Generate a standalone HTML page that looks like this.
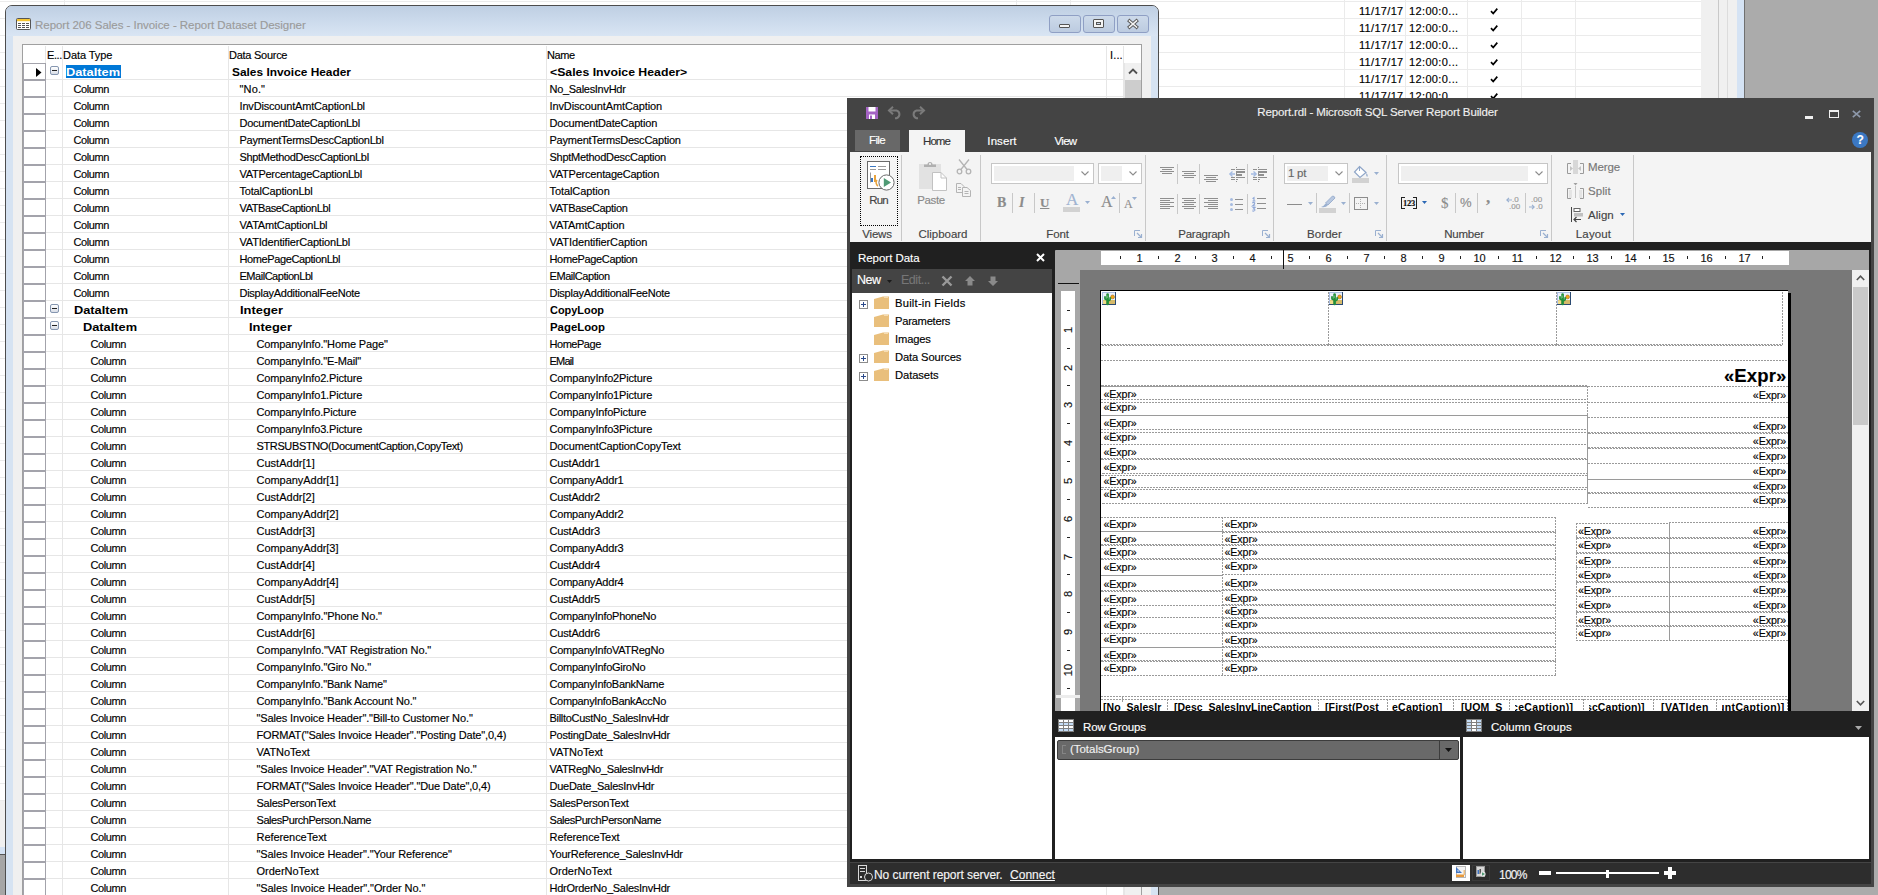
<!DOCTYPE html><html><head><meta charset="utf-8"><title>Report</title><style>
html,body{margin:0;padding:0;overflow:hidden;width:1878px;height:895px}
body{width:1878px;height:895px;overflow:hidden;position:relative;background:#ababab;font-family:"Liberation Sans",sans-serif;}
div{box-sizing:border-box}
.t{position:absolute;white-space:pre;line-height:17px;font-size:11px;color:#000;letter-spacing:-0.12px;-webkit-text-stroke:0.15px}
.b{font-weight:bold;font-size:11.5px;letter-spacing:0.3px;-webkit-text-stroke:0}
.s{font-size:11.5px;letter-spacing:-0.1px;color:#fff}
.e{font-size:10.7px;letter-spacing:-0.12px;line-height:12px}
.er{font-size:10.7px;letter-spacing:-0.12px;line-height:12px;text-align:right;width:60px}
.h{font-size:10.5px;font-weight:bold;letter-spacing:0;line-height:12px;-webkit-text-stroke:0}
.r{font-size:11.5px;letter-spacing:-0.15px;color:#444;line-height:14px}
.rg{font-size:11.5px;letter-spacing:-0.15px;color:#8a8a8a;line-height:14px}
.abs{position:absolute}
svg{position:absolute;overflow:visible}
</style></head><body><div class="abs" style="left:0;top:0;width:1878px;height:895px;overflow:hidden">
<div style="position:absolute;left:0px;top:0px;width:1701px;height:801px;background:#fff;"></div>
<div style="position:absolute;left:1159px;top:120px;width:600px;height:700px;background:#ababab;"></div>
<div style="position:absolute;left:0px;top:1px;width:1701px;height:1px;background:#ebebeb;"></div>
<div style="position:absolute;left:0px;top:18px;width:1701px;height:1px;background:#ebebeb;"></div>
<div style="position:absolute;left:0px;top:35px;width:1701px;height:1px;background:#ebebeb;"></div>
<div style="position:absolute;left:0px;top:52px;width:1701px;height:1px;background:#ebebeb;"></div>
<div style="position:absolute;left:0px;top:69px;width:1701px;height:1px;background:#ebebeb;"></div>
<div style="position:absolute;left:0px;top:86px;width:1701px;height:1px;background:#ebebeb;"></div>
<div style="position:absolute;left:0px;top:103px;width:1701px;height:1px;background:#ebebeb;"></div>
<div style="position:absolute;left:0px;top:120px;width:1701px;height:1px;background:#ebebeb;"></div>
<div style="position:absolute;left:0px;top:137px;width:1701px;height:1px;background:#ebebeb;"></div>
<div style="position:absolute;left:0px;top:154px;width:1701px;height:1px;background:#ebebeb;"></div>
<div style="position:absolute;left:0px;top:171px;width:1701px;height:1px;background:#ebebeb;"></div>
<div style="position:absolute;left:0px;top:188px;width:1701px;height:1px;background:#ebebeb;"></div>
<div style="position:absolute;left:0px;top:205px;width:1701px;height:1px;background:#ebebeb;"></div>
<div style="position:absolute;left:0px;top:222px;width:1701px;height:1px;background:#ebebeb;"></div>
<div style="position:absolute;left:0px;top:239px;width:1701px;height:1px;background:#ebebeb;"></div>
<div style="position:absolute;left:0px;top:256px;width:1701px;height:1px;background:#ebebeb;"></div>
<div style="position:absolute;left:0px;top:273px;width:1701px;height:1px;background:#ebebeb;"></div>
<div style="position:absolute;left:0px;top:290px;width:1701px;height:1px;background:#ebebeb;"></div>
<div style="position:absolute;left:0px;top:307px;width:1701px;height:1px;background:#ebebeb;"></div>
<div style="position:absolute;left:0px;top:324px;width:1701px;height:1px;background:#ebebeb;"></div>
<div style="position:absolute;left:0px;top:341px;width:1701px;height:1px;background:#ebebeb;"></div>
<div style="position:absolute;left:0px;top:358px;width:1701px;height:1px;background:#ebebeb;"></div>
<div style="position:absolute;left:0px;top:375px;width:1701px;height:1px;background:#ebebeb;"></div>
<div style="position:absolute;left:0px;top:392px;width:1701px;height:1px;background:#ebebeb;"></div>
<div style="position:absolute;left:0px;top:409px;width:1701px;height:1px;background:#ebebeb;"></div>
<div style="position:absolute;left:0px;top:426px;width:1701px;height:1px;background:#ebebeb;"></div>
<div style="position:absolute;left:0px;top:443px;width:1701px;height:1px;background:#ebebeb;"></div>
<div style="position:absolute;left:0px;top:460px;width:1701px;height:1px;background:#ebebeb;"></div>
<div style="position:absolute;left:0px;top:477px;width:1701px;height:1px;background:#ebebeb;"></div>
<div style="position:absolute;left:0px;top:494px;width:1701px;height:1px;background:#ebebeb;"></div>
<div style="position:absolute;left:0px;top:511px;width:1701px;height:1px;background:#ebebeb;"></div>
<div style="position:absolute;left:0px;top:528px;width:1701px;height:1px;background:#ebebeb;"></div>
<div style="position:absolute;left:0px;top:545px;width:1701px;height:1px;background:#ebebeb;"></div>
<div style="position:absolute;left:0px;top:562px;width:1701px;height:1px;background:#ebebeb;"></div>
<div style="position:absolute;left:0px;top:579px;width:1701px;height:1px;background:#ebebeb;"></div>
<div style="position:absolute;left:0px;top:596px;width:1701px;height:1px;background:#ebebeb;"></div>
<div style="position:absolute;left:0px;top:613px;width:1701px;height:1px;background:#ebebeb;"></div>
<div style="position:absolute;left:0px;top:630px;width:1701px;height:1px;background:#ebebeb;"></div>
<div style="position:absolute;left:0px;top:647px;width:1701px;height:1px;background:#ebebeb;"></div>
<div style="position:absolute;left:0px;top:664px;width:1701px;height:1px;background:#ebebeb;"></div>
<div style="position:absolute;left:0px;top:681px;width:1701px;height:1px;background:#ebebeb;"></div>
<div style="position:absolute;left:0px;top:698px;width:1701px;height:1px;background:#ebebeb;"></div>
<div style="position:absolute;left:0px;top:715px;width:1701px;height:1px;background:#ebebeb;"></div>
<div style="position:absolute;left:0px;top:732px;width:1701px;height:1px;background:#ebebeb;"></div>
<div style="position:absolute;left:0px;top:749px;width:1701px;height:1px;background:#ebebeb;"></div>
<div style="position:absolute;left:0px;top:766px;width:1701px;height:1px;background:#ebebeb;"></div>
<div style="position:absolute;left:0px;top:783px;width:1701px;height:1px;background:#ebebeb;"></div>
<div style="position:absolute;left:0px;top:800px;width:1701px;height:1px;background:#ebebeb;"></div>
<div style="position:absolute;left:64px;top:0px;width:1px;height:801px;background:#ebebeb;"></div>
<div style="position:absolute;left:1016px;top:0px;width:1px;height:801px;background:#ebebeb;"></div>
<div style="position:absolute;left:1070px;top:0px;width:1px;height:801px;background:#ebebeb;"></div>
<div style="position:absolute;left:1344px;top:0px;width:1px;height:801px;background:#ebebeb;"></div>
<div style="position:absolute;left:1405px;top:0px;width:1px;height:801px;background:#ebebeb;"></div>
<div style="position:absolute;left:1467px;top:0px;width:1px;height:801px;background:#ebebeb;"></div>
<div style="position:absolute;left:1521px;top:0px;width:1px;height:801px;background:#ebebeb;"></div>
<div style="position:absolute;left:1575px;top:0px;width:1px;height:801px;background:#ebebeb;"></div>
<div style="position:absolute;left:1701px;top:0px;width:36px;height:120px;background:#f0f0f0;"></div>
<div style="position:absolute;left:1718px;top:0px;width:1px;height:120px;background:#c9c9c9;"></div>
<div style="position:absolute;left:1727px;top:0px;width:1px;height:120px;background:#dcdcdc;"></div>
<div style="position:absolute;left:1737px;top:0px;width:7px;height:120px;background:#d5e3f4;"></div>
<div style="position:absolute;left:1744px;top:0px;width:1px;height:120px;background:#707070;"></div>
<div style="position:absolute;left:0px;top:801px;width:5px;height:46px;background:#f0f0f0;"></div>
<div style="position:absolute;left:0px;top:847px;width:5px;height:7px;background:#d5e3f4;"></div>
<div style="position:absolute;left:0px;top:854px;width:5px;height:1px;background:#555;"></div>
<div style="position:absolute;left:0px;top:855px;width:5px;height:40px;background:#a6a6a6;"></div>
<div class="t " style="left:1359px;top:3px;;letter-spacing:0.311px;">11/17/17</div>
<div class="t " style="left:1409px;top:3px;;letter-spacing:0.362px;">12:00:0...</div>
<svg style="left:1490px;top:7px" width="9" height="9" viewBox="0 0 9 9"><path d="M1 4.2 L3.2 6.5 L7.3 1.6" stroke="#000" stroke-width="1.7" fill="none"/></svg>
<div class="t " style="left:1359px;top:20px;;letter-spacing:0.311px;">11/17/17</div>
<div class="t " style="left:1409px;top:20px;;letter-spacing:0.362px;">12:00:0...</div>
<svg style="left:1490px;top:24px" width="9" height="9" viewBox="0 0 9 9"><path d="M1 4.2 L3.2 6.5 L7.3 1.6" stroke="#000" stroke-width="1.7" fill="none"/></svg>
<div class="t " style="left:1359px;top:37px;;letter-spacing:0.311px;">11/17/17</div>
<div class="t " style="left:1409px;top:37px;;letter-spacing:0.362px;">12:00:0...</div>
<svg style="left:1490px;top:41px" width="9" height="9" viewBox="0 0 9 9"><path d="M1 4.2 L3.2 6.5 L7.3 1.6" stroke="#000" stroke-width="1.7" fill="none"/></svg>
<div class="t " style="left:1359px;top:54px;;letter-spacing:0.311px;">11/17/17</div>
<div class="t " style="left:1409px;top:54px;;letter-spacing:0.362px;">12:00:0...</div>
<svg style="left:1490px;top:58px" width="9" height="9" viewBox="0 0 9 9"><path d="M1 4.2 L3.2 6.5 L7.3 1.6" stroke="#000" stroke-width="1.7" fill="none"/></svg>
<div class="t " style="left:1359px;top:71px;;letter-spacing:0.311px;">11/17/17</div>
<div class="t " style="left:1409px;top:71px;;letter-spacing:0.362px;">12:00:0...</div>
<svg style="left:1490px;top:75px" width="9" height="9" viewBox="0 0 9 9"><path d="M1 4.2 L3.2 6.5 L7.3 1.6" stroke="#000" stroke-width="1.7" fill="none"/></svg>
<div class="t " style="left:1359px;top:88px;;letter-spacing:0.311px;">11/17/17</div>
<div class="t " style="left:1409px;top:88px;;letter-spacing:0.362px;">12:00:0...</div>
<svg style="left:1490px;top:92px" width="9" height="9" viewBox="0 0 9 9"><path d="M1 4.2 L3.2 6.5 L7.3 1.6" stroke="#000" stroke-width="1.7" fill="none"/></svg>
<div class="abs" style="left:5px;top:5px;width:1154px;height:900px;border:1px solid #4d4d4d;border-radius:7px 7px 0 0;background:#d6e3f2;overflow:hidden">
<div class="abs" style="left:0;top:0;width:1152px;height:30px;background:linear-gradient(#bfcfe3,#c9d8ea 40%,#d9e5f3)"></div>
</div>
<div style="position:absolute;left:13px;top:36px;width:1138px;height:870px;background:#f0f0f0;"></div>
<svg style="left:16px;top:18px" width="16" height="13" viewBox="0 0 16 13"><rect x="0.5" y="0.5" width="14" height="11" rx="1" fill="#fff" stroke="#555"/><rect x="1" y="1" width="13" height="2.2" fill="#f4c430"/><g stroke="#555" stroke-width="1"><path d="M2 5.5h3M6 5.5h3M10 5.5h3M2 7.5h3M6 7.5h3M10 7.5h3M2 9.5h3M6 9.5h3M10 9.5h3"/></g></svg>
<div class="t s" style="left:35px;top:16px;color:#9b9b9b;line-height:18px;letter-spacing:-0.031px;">Report 206 Sales - Invoice - Report Dataset Designer</div>
<div class="abs" style="left:1049px;top:15px;width:32px;height:18px;border:1px solid #8f9fc4;border-radius:3px;background:linear-gradient(#cddaea,#bccbe0)"></div>
<div class="abs" style="left:1083px;top:15px;width:32px;height:18px;border:1px solid #8f9fc4;border-radius:3px;background:linear-gradient(#cddaea,#bccbe0)"></div>
<div class="abs" style="left:1117px;top:15px;width:32px;height:18px;border:1px solid #8f9fc4;border-radius:3px;background:linear-gradient(#cddaea,#bccbe0)"></div>
<div class="abs" style="left:1059px;top:24px;width:11px;height:4px;border:1px solid #555;border-radius:1px;background:#f4f4f4"></div>
<div class="abs" style="left:1093px;top:19px;width:11px;height:9px;border:1px solid #555;border-radius:1px;background:#f4f4f4"></div>
<div class="abs" style="left:1096px;top:22px;width:5px;height:3px;border:1px solid #555;background:#cddaea"></div>
<svg style="left:1128px;top:20px" width="10" height="8" viewBox="0 0 10 8"><path d="M1.5 1 L8.5 7 M8.5 1 L1.5 7" stroke="#555" stroke-width="3.4" stroke-linecap="square"/><path d="M1.5 1 L8.5 7 M8.5 1 L1.5 7" stroke="#f4f4f4" stroke-width="1.6" stroke-linecap="square"/></svg>
<div class="abs" style="left:22px;top:44px;width:1120px;height:870px;border:1px solid #a0a0a0;background:#fff"></div>
<div style="position:absolute;left:45px;top:46px;width:1px;height:860px;background:#e6e6e6;"></div>
<div style="position:absolute;left:62px;top:46px;width:1px;height:860px;background:#e6e6e6;"></div>
<div style="position:absolute;left:228px;top:46px;width:1px;height:860px;background:#e6e6e6;"></div>
<div style="position:absolute;left:546px;top:46px;width:1px;height:860px;background:#e6e6e6;"></div>
<div style="position:absolute;left:1106px;top:46px;width:1px;height:860px;background:#e6e6e6;"></div>
<div style="position:absolute;left:1123px;top:46px;width:1px;height:860px;background:#e6e6e6;"></div>
<div style="position:absolute;left:46px;top:79px;width:1078px;height:1px;background:#e6e6e6;"></div>
<div style="position:absolute;left:46px;top:96px;width:1078px;height:1px;background:#e6e6e6;"></div>
<div style="position:absolute;left:46px;top:113px;width:1078px;height:1px;background:#e6e6e6;"></div>
<div style="position:absolute;left:46px;top:130px;width:1078px;height:1px;background:#e6e6e6;"></div>
<div style="position:absolute;left:46px;top:147px;width:1078px;height:1px;background:#e6e6e6;"></div>
<div style="position:absolute;left:46px;top:164px;width:1078px;height:1px;background:#e6e6e6;"></div>
<div style="position:absolute;left:46px;top:181px;width:1078px;height:1px;background:#e6e6e6;"></div>
<div style="position:absolute;left:46px;top:198px;width:1078px;height:1px;background:#e6e6e6;"></div>
<div style="position:absolute;left:46px;top:215px;width:1078px;height:1px;background:#e6e6e6;"></div>
<div style="position:absolute;left:46px;top:232px;width:1078px;height:1px;background:#e6e6e6;"></div>
<div style="position:absolute;left:46px;top:249px;width:1078px;height:1px;background:#e6e6e6;"></div>
<div style="position:absolute;left:46px;top:266px;width:1078px;height:1px;background:#e6e6e6;"></div>
<div style="position:absolute;left:46px;top:283px;width:1078px;height:1px;background:#e6e6e6;"></div>
<div style="position:absolute;left:46px;top:300px;width:1078px;height:1px;background:#e6e6e6;"></div>
<div style="position:absolute;left:46px;top:317px;width:1078px;height:1px;background:#e6e6e6;"></div>
<div style="position:absolute;left:46px;top:334px;width:1078px;height:1px;background:#e6e6e6;"></div>
<div style="position:absolute;left:46px;top:351px;width:1078px;height:1px;background:#e6e6e6;"></div>
<div style="position:absolute;left:46px;top:368px;width:1078px;height:1px;background:#e6e6e6;"></div>
<div style="position:absolute;left:46px;top:385px;width:1078px;height:1px;background:#e6e6e6;"></div>
<div style="position:absolute;left:46px;top:402px;width:1078px;height:1px;background:#e6e6e6;"></div>
<div style="position:absolute;left:46px;top:419px;width:1078px;height:1px;background:#e6e6e6;"></div>
<div style="position:absolute;left:46px;top:436px;width:1078px;height:1px;background:#e6e6e6;"></div>
<div style="position:absolute;left:46px;top:453px;width:1078px;height:1px;background:#e6e6e6;"></div>
<div style="position:absolute;left:46px;top:470px;width:1078px;height:1px;background:#e6e6e6;"></div>
<div style="position:absolute;left:46px;top:487px;width:1078px;height:1px;background:#e6e6e6;"></div>
<div style="position:absolute;left:46px;top:504px;width:1078px;height:1px;background:#e6e6e6;"></div>
<div style="position:absolute;left:46px;top:521px;width:1078px;height:1px;background:#e6e6e6;"></div>
<div style="position:absolute;left:46px;top:538px;width:1078px;height:1px;background:#e6e6e6;"></div>
<div style="position:absolute;left:46px;top:555px;width:1078px;height:1px;background:#e6e6e6;"></div>
<div style="position:absolute;left:46px;top:572px;width:1078px;height:1px;background:#e6e6e6;"></div>
<div style="position:absolute;left:46px;top:589px;width:1078px;height:1px;background:#e6e6e6;"></div>
<div style="position:absolute;left:46px;top:606px;width:1078px;height:1px;background:#e6e6e6;"></div>
<div style="position:absolute;left:46px;top:623px;width:1078px;height:1px;background:#e6e6e6;"></div>
<div style="position:absolute;left:46px;top:640px;width:1078px;height:1px;background:#e6e6e6;"></div>
<div style="position:absolute;left:46px;top:657px;width:1078px;height:1px;background:#e6e6e6;"></div>
<div style="position:absolute;left:46px;top:674px;width:1078px;height:1px;background:#e6e6e6;"></div>
<div style="position:absolute;left:46px;top:691px;width:1078px;height:1px;background:#e6e6e6;"></div>
<div style="position:absolute;left:46px;top:708px;width:1078px;height:1px;background:#e6e6e6;"></div>
<div style="position:absolute;left:46px;top:725px;width:1078px;height:1px;background:#e6e6e6;"></div>
<div style="position:absolute;left:46px;top:742px;width:1078px;height:1px;background:#e6e6e6;"></div>
<div style="position:absolute;left:46px;top:759px;width:1078px;height:1px;background:#e6e6e6;"></div>
<div style="position:absolute;left:46px;top:776px;width:1078px;height:1px;background:#e6e6e6;"></div>
<div style="position:absolute;left:46px;top:793px;width:1078px;height:1px;background:#e6e6e6;"></div>
<div style="position:absolute;left:46px;top:810px;width:1078px;height:1px;background:#e6e6e6;"></div>
<div style="position:absolute;left:46px;top:827px;width:1078px;height:1px;background:#e6e6e6;"></div>
<div style="position:absolute;left:46px;top:844px;width:1078px;height:1px;background:#e6e6e6;"></div>
<div style="position:absolute;left:46px;top:861px;width:1078px;height:1px;background:#e6e6e6;"></div>
<div style="position:absolute;left:46px;top:878px;width:1078px;height:1px;background:#e6e6e6;"></div>
<div style="position:absolute;left:46px;top:895px;width:1078px;height:1px;background:#e6e6e6;"></div>
<div style="position:absolute;left:23px;top:63px;width:23px;height:1px;background:#a3a3ab;"></div>
<div style="position:absolute;left:23px;top:79px;width:23px;height:2px;background:#a3a3ab;"></div>
<div style="position:absolute;left:23px;top:96px;width:23px;height:2px;background:#a3a3ab;"></div>
<div style="position:absolute;left:23px;top:113px;width:23px;height:2px;background:#a3a3ab;"></div>
<div style="position:absolute;left:23px;top:130px;width:23px;height:2px;background:#a3a3ab;"></div>
<div style="position:absolute;left:23px;top:147px;width:23px;height:2px;background:#a3a3ab;"></div>
<div style="position:absolute;left:23px;top:164px;width:23px;height:2px;background:#a3a3ab;"></div>
<div style="position:absolute;left:23px;top:181px;width:23px;height:2px;background:#a3a3ab;"></div>
<div style="position:absolute;left:23px;top:198px;width:23px;height:2px;background:#a3a3ab;"></div>
<div style="position:absolute;left:23px;top:215px;width:23px;height:2px;background:#a3a3ab;"></div>
<div style="position:absolute;left:23px;top:232px;width:23px;height:2px;background:#a3a3ab;"></div>
<div style="position:absolute;left:23px;top:249px;width:23px;height:2px;background:#a3a3ab;"></div>
<div style="position:absolute;left:23px;top:266px;width:23px;height:2px;background:#a3a3ab;"></div>
<div style="position:absolute;left:23px;top:283px;width:23px;height:2px;background:#a3a3ab;"></div>
<div style="position:absolute;left:23px;top:300px;width:23px;height:2px;background:#a3a3ab;"></div>
<div style="position:absolute;left:23px;top:317px;width:23px;height:2px;background:#a3a3ab;"></div>
<div style="position:absolute;left:23px;top:334px;width:23px;height:2px;background:#a3a3ab;"></div>
<div style="position:absolute;left:23px;top:351px;width:23px;height:2px;background:#a3a3ab;"></div>
<div style="position:absolute;left:23px;top:368px;width:23px;height:2px;background:#a3a3ab;"></div>
<div style="position:absolute;left:23px;top:385px;width:23px;height:2px;background:#a3a3ab;"></div>
<div style="position:absolute;left:23px;top:402px;width:23px;height:2px;background:#a3a3ab;"></div>
<div style="position:absolute;left:23px;top:419px;width:23px;height:2px;background:#a3a3ab;"></div>
<div style="position:absolute;left:23px;top:436px;width:23px;height:2px;background:#a3a3ab;"></div>
<div style="position:absolute;left:23px;top:453px;width:23px;height:2px;background:#a3a3ab;"></div>
<div style="position:absolute;left:23px;top:470px;width:23px;height:2px;background:#a3a3ab;"></div>
<div style="position:absolute;left:23px;top:487px;width:23px;height:2px;background:#a3a3ab;"></div>
<div style="position:absolute;left:23px;top:504px;width:23px;height:2px;background:#a3a3ab;"></div>
<div style="position:absolute;left:23px;top:521px;width:23px;height:2px;background:#a3a3ab;"></div>
<div style="position:absolute;left:23px;top:538px;width:23px;height:2px;background:#a3a3ab;"></div>
<div style="position:absolute;left:23px;top:555px;width:23px;height:2px;background:#a3a3ab;"></div>
<div style="position:absolute;left:23px;top:572px;width:23px;height:2px;background:#a3a3ab;"></div>
<div style="position:absolute;left:23px;top:589px;width:23px;height:2px;background:#a3a3ab;"></div>
<div style="position:absolute;left:23px;top:606px;width:23px;height:2px;background:#a3a3ab;"></div>
<div style="position:absolute;left:23px;top:623px;width:23px;height:2px;background:#a3a3ab;"></div>
<div style="position:absolute;left:23px;top:640px;width:23px;height:2px;background:#a3a3ab;"></div>
<div style="position:absolute;left:23px;top:657px;width:23px;height:2px;background:#a3a3ab;"></div>
<div style="position:absolute;left:23px;top:674px;width:23px;height:2px;background:#a3a3ab;"></div>
<div style="position:absolute;left:23px;top:691px;width:23px;height:2px;background:#a3a3ab;"></div>
<div style="position:absolute;left:23px;top:708px;width:23px;height:2px;background:#a3a3ab;"></div>
<div style="position:absolute;left:23px;top:725px;width:23px;height:2px;background:#a3a3ab;"></div>
<div style="position:absolute;left:23px;top:742px;width:23px;height:2px;background:#a3a3ab;"></div>
<div style="position:absolute;left:23px;top:759px;width:23px;height:2px;background:#a3a3ab;"></div>
<div style="position:absolute;left:23px;top:776px;width:23px;height:2px;background:#a3a3ab;"></div>
<div style="position:absolute;left:23px;top:793px;width:23px;height:2px;background:#a3a3ab;"></div>
<div style="position:absolute;left:23px;top:810px;width:23px;height:2px;background:#a3a3ab;"></div>
<div style="position:absolute;left:23px;top:827px;width:23px;height:2px;background:#a3a3ab;"></div>
<div style="position:absolute;left:23px;top:844px;width:23px;height:2px;background:#a3a3ab;"></div>
<div style="position:absolute;left:23px;top:861px;width:23px;height:2px;background:#a3a3ab;"></div>
<div style="position:absolute;left:23px;top:878px;width:23px;height:2px;background:#a3a3ab;"></div>
<div style="position:absolute;left:23px;top:895px;width:23px;height:2px;background:#a3a3ab;"></div>
<div style="position:absolute;left:23px;top:63px;width:1px;height:840px;background:#a3a3ab;"></div>
<div style="position:absolute;left:45px;top:63px;width:1px;height:840px;background:#a3a3ab;"></div>
<div style="position:absolute;left:1125px;top:63px;width:16px;height:840px;background:#f0f0f0;"></div>
<div style="position:absolute;left:1124px;top:63px;width:1px;height:840px;background:#e6e6e6;"></div>
<div style="position:absolute;left:1125px;top:80px;width:16px;height:30px;background:#cdcdcd;"></div>
<svg style="left:1128px;top:68px" width="10" height="7" viewBox="0 0 10 7"><path d="M1 5.5 L5 1.5 L9 5.5" stroke="#505050" stroke-width="1.8" fill="none"/></svg>
<div class="t " style="left:47px;top:47px;;letter-spacing:-0.428px;">E...</div>
<div class="t " style="left:63px;top:47px;;letter-spacing:-0.067px;">Data Type</div>
<div class="t " style="left:229px;top:47px;;letter-spacing:-0.266px;">Data Source</div>
<div class="t " style="left:547px;top:47px;;letter-spacing:-0.427px;">Name</div>
<div class="t " style="left:1110px;top:47px;;letter-spacing:0.149px;">I...</div>
<svg style="left:36px;top:68px" width="6" height="9" viewBox="0 0 6 9"><path d="M0 0 L5.5 4.5 L0 9 Z" fill="#000"/></svg>
<div style="position:absolute;left:66px;top:65px;width:55px;height:13px;background:#0078d7;"></div>
<div class="t b" style="left:66px;top:64px;color:#fff;letter-spacing:0;transform:scaleX(1.1124);transform-origin:0 0;">DataItem</div>
<div class="t b" style="left:232px;top:64px;;letter-spacing:0;transform:scaleX(1.0342);transform-origin:0 0;">Sales Invoice Header</div>
<div class="t b" style="left:550px;top:64px;;letter-spacing:0;transform:scaleX(1.0674);transform-origin:0 0;">&lt;Sales Invoice Header&gt;</div>
<div class="abs" style="left:50px;top:66px;width:9px;height:9px;border:1px solid #8596b0;border-radius:2px;background:linear-gradient(#fff,#d8dde6)"></div>
<div style="position:absolute;left:52px;top:70px;width:5px;height:1px;background:#222;"></div>
<div class="t " style="left:73.5px;top:80.7px;;letter-spacing:-0.396px;">Column</div>
<div class="t " style="left:239.5px;top:80.7px;;letter-spacing:0.145px;">"No."</div>
<div class="t " style="left:549.5px;top:80.7px;;letter-spacing:-0.292px;">No_SalesInvHdr</div>
<div class="t " style="left:73.5px;top:97.7px;;letter-spacing:-0.396px;">Column</div>
<div class="t " style="left:239.5px;top:97.7px;;letter-spacing:-0.178px;">InvDiscountAmtCaptionLbl</div>
<div class="t " style="left:549.5px;top:97.7px;;letter-spacing:-0.116px;">InvDiscountAmtCaption</div>
<div class="t " style="left:73.5px;top:114.7px;;letter-spacing:-0.396px;">Column</div>
<div class="t " style="left:239.5px;top:114.7px;;letter-spacing:-0.252px;">DocumentDateCaptionLbl</div>
<div class="t " style="left:549.5px;top:114.7px;;letter-spacing:-0.195px;">DocumentDateCaption</div>
<div class="t " style="left:73.5px;top:131.7px;;letter-spacing:-0.396px;">Column</div>
<div class="t " style="left:239.5px;top:131.7px;;letter-spacing:-0.266px;">PaymentTermsDescCaptionLbl</div>
<div class="t " style="left:549.5px;top:131.7px;;letter-spacing:-0.221px;">PaymentTermsDescCaption</div>
<div class="t " style="left:73.5px;top:148.7px;;letter-spacing:-0.396px;">Column</div>
<div class="t " style="left:239.5px;top:148.7px;;letter-spacing:-0.32px;">ShptMethodDescCaptionLbl</div>
<div class="t " style="left:549.5px;top:148.7px;;letter-spacing:-0.278px;">ShptMethodDescCaption</div>
<div class="t " style="left:73.5px;top:165.7px;;letter-spacing:-0.396px;">Column</div>
<div class="t " style="left:239.5px;top:165.7px;;letter-spacing:-0.271px;">VATPercentageCaptionLbl</div>
<div class="t " style="left:549.5px;top:165.7px;;letter-spacing:-0.219px;">VATPercentageCaption</div>
<div class="t " style="left:73.5px;top:182.7px;;letter-spacing:-0.396px;">Column</div>
<div class="t " style="left:239.5px;top:182.7px;;letter-spacing:-0.187px;">TotalCaptionLbl</div>
<div class="t " style="left:549.5px;top:182.7px;;letter-spacing:-0.079px;">TotalCaption</div>
<div class="t " style="left:73.5px;top:199.7px;;letter-spacing:-0.396px;">Column</div>
<div class="t " style="left:239.5px;top:199.7px;;letter-spacing:-0.39px;">VATBaseCaptionLbl</div>
<div class="t " style="left:549.5px;top:199.7px;;letter-spacing:-0.341px;">VATBaseCaption</div>
<div class="t " style="left:73.5px;top:216.7px;;letter-spacing:-0.396px;">Column</div>
<div class="t " style="left:239.5px;top:216.7px;;letter-spacing:-0.203px;">VATAmtCaptionLbl</div>
<div class="t " style="left:549.5px;top:216.7px;;letter-spacing:-0.108px;">VATAmtCaption</div>
<div class="t " style="left:73.5px;top:233.7px;;letter-spacing:-0.396px;">Column</div>
<div class="t " style="left:239.5px;top:233.7px;;letter-spacing:-0.174px;">VATIdentifierCaptionLbl</div>
<div class="t " style="left:549.5px;top:233.7px;;letter-spacing:-0.108px;">VATIdentifierCaption</div>
<div class="t " style="left:73.5px;top:250.7px;;letter-spacing:-0.396px;">Column</div>
<div class="t " style="left:239.5px;top:250.7px;;letter-spacing:-0.387px;">HomePageCaptionLbl</div>
<div class="t " style="left:549.5px;top:250.7px;;letter-spacing:-0.341px;">HomePageCaption</div>
<div class="t " style="left:73.5px;top:267.7px;;letter-spacing:-0.396px;">Column</div>
<div class="t " style="left:239.5px;top:267.7px;;letter-spacing:-0.471px;">EMailCaptionLbl</div>
<div class="t " style="left:549.5px;top:267.7px;;letter-spacing:-0.435px;">EMailCaption</div>
<div class="t " style="left:73.5px;top:284.7px;;letter-spacing:-0.396px;">Column</div>
<div class="t " style="left:239.5px;top:284.7px;;letter-spacing:-0.257px;">DisplayAdditionalFeeNote</div>
<div class="t " style="left:549.5px;top:284.7px;;letter-spacing:-0.257px;">DisplayAdditionalFeeNote</div>
<div class="t b" style="left:74px;top:302px;;letter-spacing:0;transform:scaleX(1.1124);transform-origin:0 0;">DataItem</div>
<div class="t b" style="left:240px;top:302px;;letter-spacing:0;transform:scaleX(1.1204);transform-origin:0 0;">Integer</div>
<div class="t b" style="left:550px;top:302px;;letter-spacing:0;transform:scaleX(0.9504);transform-origin:0 0;">CopyLoop</div>
<div class="abs" style="left:50px;top:304px;width:9px;height:9px;border:1px solid #8596b0;border-radius:2px;background:linear-gradient(#fff,#d8dde6)"></div>
<div style="position:absolute;left:52px;top:308px;width:5px;height:1px;background:#222;"></div>
<div class="t b" style="left:83px;top:319px;;letter-spacing:0;transform:scaleX(1.1124);transform-origin:0 0;">DataItem</div>
<div class="t b" style="left:249px;top:319px;;letter-spacing:0;transform:scaleX(1.1204);transform-origin:0 0;">Integer</div>
<div class="t b" style="left:550px;top:319px;;letter-spacing:0;transform:scaleX(0.99);transform-origin:0 0;">PageLoop</div>
<div class="abs" style="left:50px;top:321px;width:9px;height:9px;border:1px solid #8596b0;border-radius:2px;background:linear-gradient(#fff,#d8dde6)"></div>
<div style="position:absolute;left:52px;top:325px;width:5px;height:1px;background:#222;"></div>
<div class="t " style="left:90.5px;top:335.7px;;letter-spacing:-0.396px;">Column</div>
<div class="t " style="left:256.5px;top:335.7px;;letter-spacing:-0.136px;">CompanyInfo."Home Page"</div>
<div class="t " style="left:549.5px;top:335.7px;;letter-spacing:-0.465px;">HomePage</div>
<div class="t " style="left:90.5px;top:352.7px;;letter-spacing:-0.396px;">Column</div>
<div class="t " style="left:256.5px;top:352.7px;;letter-spacing:-0.142px;">CompanyInfo."E-Mail"</div>
<div class="t " style="left:549.5px;top:352.7px;;letter-spacing:-0.766px;">EMail</div>
<div class="t " style="left:90.5px;top:369.7px;;letter-spacing:-0.396px;">Column</div>
<div class="t " style="left:256.5px;top:369.7px;;letter-spacing:-0.162px;">CompanyInfo2.Picture</div>
<div class="t " style="left:549.5px;top:369.7px;;letter-spacing:-0.165px;">CompanyInfo2Picture</div>
<div class="t " style="left:90.5px;top:386.7px;;letter-spacing:-0.396px;">Column</div>
<div class="t " style="left:256.5px;top:386.7px;;letter-spacing:-0.162px;">CompanyInfo1.Picture</div>
<div class="t " style="left:549.5px;top:386.7px;;letter-spacing:-0.165px;">CompanyInfo1Picture</div>
<div class="t " style="left:90.5px;top:403.7px;;letter-spacing:-0.396px;">Column</div>
<div class="t " style="left:256.5px;top:403.7px;;letter-spacing:-0.16px;">CompanyInfo.Picture</div>
<div class="t " style="left:549.5px;top:403.7px;;letter-spacing:-0.164px;">CompanyInfoPicture</div>
<div class="t " style="left:90.5px;top:420.7px;;letter-spacing:-0.396px;">Column</div>
<div class="t " style="left:256.5px;top:420.7px;;letter-spacing:-0.162px;">CompanyInfo3.Picture</div>
<div class="t " style="left:549.5px;top:420.7px;;letter-spacing:-0.165px;">CompanyInfo3Picture</div>
<div class="t " style="left:90.5px;top:437.7px;;letter-spacing:-0.396px;">Column</div>
<div class="t " style="left:256.5px;top:437.7px;;letter-spacing:-0.366px;">STRSUBSTNO(DocumentCaption,CopyText)</div>
<div class="t " style="left:549.5px;top:437.7px;;letter-spacing:-0.115px;">DocumentCaptionCopyText</div>
<div class="t " style="left:90.5px;top:454.7px;;letter-spacing:-0.396px;">Column</div>
<div class="t " style="left:256.5px;top:454.7px;;letter-spacing:0.013px;">CustAddr[1]</div>
<div class="t " style="left:549.5px;top:454.7px;;letter-spacing:-0.183px;">CustAddr1</div>
<div class="t " style="left:90.5px;top:471.7px;;letter-spacing:-0.396px;">Column</div>
<div class="t " style="left:256.5px;top:471.7px;;letter-spacing:-0.045px;">CompanyAddr[1]</div>
<div class="t " style="left:549.5px;top:471.7px;;letter-spacing:-0.201px;">CompanyAddr1</div>
<div class="t " style="left:90.5px;top:488.7px;;letter-spacing:-0.396px;">Column</div>
<div class="t " style="left:256.5px;top:488.7px;;letter-spacing:0.013px;">CustAddr[2]</div>
<div class="t " style="left:549.5px;top:488.7px;;letter-spacing:-0.183px;">CustAddr2</div>
<div class="t " style="left:90.5px;top:505.7px;;letter-spacing:-0.396px;">Column</div>
<div class="t " style="left:256.5px;top:505.7px;;letter-spacing:-0.045px;">CompanyAddr[2]</div>
<div class="t " style="left:549.5px;top:505.7px;;letter-spacing:-0.201px;">CompanyAddr2</div>
<div class="t " style="left:90.5px;top:522.7px;;letter-spacing:-0.396px;">Column</div>
<div class="t " style="left:256.5px;top:522.7px;;letter-spacing:0.013px;">CustAddr[3]</div>
<div class="t " style="left:549.5px;top:522.7px;;letter-spacing:-0.183px;">CustAddr3</div>
<div class="t " style="left:90.5px;top:539.7px;;letter-spacing:-0.396px;">Column</div>
<div class="t " style="left:256.5px;top:539.7px;;letter-spacing:-0.045px;">CompanyAddr[3]</div>
<div class="t " style="left:549.5px;top:539.7px;;letter-spacing:-0.201px;">CompanyAddr3</div>
<div class="t " style="left:90.5px;top:556.7px;;letter-spacing:-0.396px;">Column</div>
<div class="t " style="left:256.5px;top:556.7px;;letter-spacing:0.013px;">CustAddr[4]</div>
<div class="t " style="left:549.5px;top:556.7px;;letter-spacing:-0.183px;">CustAddr4</div>
<div class="t " style="left:90.5px;top:573.7px;;letter-spacing:-0.396px;">Column</div>
<div class="t " style="left:256.5px;top:573.7px;;letter-spacing:-0.045px;">CompanyAddr[4]</div>
<div class="t " style="left:549.5px;top:573.7px;;letter-spacing:-0.201px;">CompanyAddr4</div>
<div class="t " style="left:90.5px;top:590.7px;;letter-spacing:-0.396px;">Column</div>
<div class="t " style="left:256.5px;top:590.7px;;letter-spacing:0.013px;">CustAddr[5]</div>
<div class="t " style="left:549.5px;top:590.7px;;letter-spacing:-0.183px;">CustAddr5</div>
<div class="t " style="left:90.5px;top:607.7px;;letter-spacing:-0.396px;">Column</div>
<div class="t " style="left:256.5px;top:607.7px;;letter-spacing:-0.127px;">CompanyInfo."Phone No."</div>
<div class="t " style="left:549.5px;top:607.7px;;letter-spacing:-0.261px;">CompanyInfoPhoneNo</div>
<div class="t " style="left:90.5px;top:624.7px;;letter-spacing:-0.396px;">Column</div>
<div class="t " style="left:256.5px;top:624.7px;;letter-spacing:0.013px;">CustAddr[6]</div>
<div class="t " style="left:549.5px;top:624.7px;;letter-spacing:-0.183px;">CustAddr6</div>
<div class="t " style="left:90.5px;top:641.7px;;letter-spacing:-0.396px;">Column</div>
<div class="t " style="left:256.5px;top:641.7px;;letter-spacing:-0.091px;">CompanyInfo."VAT Registration No."</div>
<div class="t " style="left:549.5px;top:641.7px;;letter-spacing:-0.26px;">CompanyInfoVATRegNo</div>
<div class="t " style="left:90.5px;top:658.7px;;letter-spacing:-0.396px;">Column</div>
<div class="t " style="left:256.5px;top:658.7px;;letter-spacing:-0.125px;">CompanyInfo."Giro No."</div>
<div class="t " style="left:549.5px;top:658.7px;;letter-spacing:-0.267px;">CompanyInfoGiroNo</div>
<div class="t " style="left:90.5px;top:675.7px;;letter-spacing:-0.396px;">Column</div>
<div class="t " style="left:256.5px;top:675.7px;;letter-spacing:-0.151px;">CompanyInfo."Bank Name"</div>
<div class="t " style="left:549.5px;top:675.7px;;letter-spacing:-0.282px;">CompanyInfoBankName</div>
<div class="t " style="left:90.5px;top:692.7px;;letter-spacing:-0.396px;">Column</div>
<div class="t " style="left:256.5px;top:692.7px;;letter-spacing:-0.128px;">CompanyInfo."Bank Account No."</div>
<div class="t " style="left:549.5px;top:692.7px;;letter-spacing:-0.322px;">CompanyInfoBankAccNo</div>
<div class="t " style="left:90.5px;top:709.7px;;letter-spacing:-0.396px;">Column</div>
<div class="t " style="left:256.5px;top:709.7px;;letter-spacing:-0.122px;">"Sales Invoice Header"."Bill-to Customer No."</div>
<div class="t " style="left:549.5px;top:709.7px;;letter-spacing:-0.297px;">BilltoCustNo_SalesInvHdr</div>
<div class="t " style="left:90.5px;top:726.7px;;letter-spacing:-0.396px;">Column</div>
<div class="t " style="left:256.5px;top:726.7px;;letter-spacing:-0.159px;">FORMAT("Sales Invoice Header"."Posting Date",0,4)</div>
<div class="t " style="left:549.5px;top:726.7px;;letter-spacing:-0.242px;">PostingDate_SalesInvHdr</div>
<div class="t " style="left:90.5px;top:743.7px;;letter-spacing:-0.396px;">Column</div>
<div class="t " style="left:256.5px;top:743.7px;;letter-spacing:-0.078px;">VATNoText</div>
<div class="t " style="left:549.5px;top:743.7px;;letter-spacing:-0.078px;">VATNoText</div>
<div class="t " style="left:90.5px;top:760.7px;;letter-spacing:-0.396px;">Column</div>
<div class="t " style="left:256.5px;top:760.7px;;letter-spacing:-0.103px;">"Sales Invoice Header"."VAT Registration No."</div>
<div class="t " style="left:549.5px;top:760.7px;;letter-spacing:-0.327px;">VATRegNo_SalesInvHdr</div>
<div class="t " style="left:90.5px;top:777.7px;;letter-spacing:-0.396px;">Column</div>
<div class="t " style="left:256.5px;top:777.7px;;letter-spacing:-0.158px;">FORMAT("Sales Invoice Header"."Due Date",0,4)</div>
<div class="t " style="left:549.5px;top:777.7px;;letter-spacing:-0.254px;">DueDate_SalesInvHdr</div>
<div class="t " style="left:90.5px;top:794.7px;;letter-spacing:-0.396px;">Column</div>
<div class="t " style="left:256.5px;top:794.7px;;letter-spacing:-0.239px;">SalesPersonText</div>
<div class="t " style="left:549.5px;top:794.7px;;letter-spacing:-0.239px;">SalesPersonText</div>
<div class="t " style="left:90.5px;top:811.7px;;letter-spacing:-0.396px;">Column</div>
<div class="t " style="left:256.5px;top:811.7px;;letter-spacing:-0.43px;">SalesPurchPerson.Name</div>
<div class="t " style="left:549.5px;top:811.7px;;letter-spacing:-0.446px;">SalesPurchPersonName</div>
<div class="t " style="left:90.5px;top:828.7px;;letter-spacing:-0.396px;">Column</div>
<div class="t " style="left:256.5px;top:828.7px;;letter-spacing:-0.066px;">ReferenceText</div>
<div class="t " style="left:549.5px;top:828.7px;;letter-spacing:-0.066px;">ReferenceText</div>
<div class="t " style="left:90.5px;top:845.7px;;letter-spacing:-0.396px;">Column</div>
<div class="t " style="left:256.5px;top:845.7px;;letter-spacing:-0.099px;">"Sales Invoice Header"."Your Reference"</div>
<div class="t " style="left:549.5px;top:845.7px;;letter-spacing:-0.231px;">YourReference_SalesInvHdr</div>
<div class="t " style="left:90.5px;top:862.7px;;letter-spacing:-0.396px;">Column</div>
<div class="t " style="left:256.5px;top:862.7px;;letter-spacing:-0.016px;">OrderNoText</div>
<div class="t " style="left:549.5px;top:862.7px;;letter-spacing:-0.016px;">OrderNoText</div>
<div class="t " style="left:90.5px;top:879.7px;;letter-spacing:-0.396px;">Column</div>
<div class="t " style="left:256.5px;top:879.7px;;letter-spacing:-0.081px;">"Sales Invoice Header"."Order No."</div>
<div class="t " style="left:549.5px;top:879.7px;;letter-spacing:-0.251px;">HdrOrderNo_SalesInvHdr</div>
<div style="position:absolute;left:847px;top:98px;width:1027px;height:789px;background:#444;"></div>
<div style="position:absolute;left:850px;top:152px;width:1021px;height:90px;background:#f4f4f4;"></div>
<div style="position:absolute;left:850px;top:242px;width:1021px;height:620px;background:#202020;"></div>
<svg style="left:866px;top:107px" width="12" height="12" viewBox="0 0 12 12"><rect x="0" y="0" width="12" height="12" fill="#a463c4"/><rect x="2.5" y="0" width="7" height="4.5" fill="#fff"/><rect x="3" y="7.5" width="6" height="4.5" fill="#fff"/><rect x="4" y="8.5" width="2" height="3.5" fill="#a463c4"/></svg>
<svg style="left:888px;top:106px" width="14" height="13" viewBox="0 0 14 13"><path d="M1 4.5 H8.5 A4 4 0 0 1 8.5 12.2 H7" stroke="#7a7a7a" stroke-width="2" fill="none"/><path d="M5 0.8 L1 4.5 L5 8.2" stroke="#7a7a7a" stroke-width="2" fill="none"/></svg>
<svg style="left:911px;top:106px" width="14" height="13" viewBox="0 0 14 13"><path d="M13 4.5 H5.5 A4 4 0 0 0 5.5 12.2 H7" stroke="#7a7a7a" stroke-width="2" fill="none"/><path d="M9 0.8 L13 4.5 L9 8.2" stroke="#7a7a7a" stroke-width="2" fill="none"/></svg>
<div class="t s" style="left:1077.5px;top:104px;width:600px;text-align:center;color:#f0f0f0;letter-spacing:-0.134px;">Report.rdl - Microsoft SQL Server Report Builder</div>
<div style="position:absolute;left:1805px;top:116px;width:8px;height:3px;background:#f0f0f0;"></div>
<div class="abs" style="left:1829px;top:110px;width:9.5px;height:7.5px;border:1px solid #f0f0f0;border-top-width:2.5px"></div>
<svg style="left:1852px;top:110px" width="9" height="8" viewBox="0 0 9 8"><path d="M0.8 0.8 L8.2 7.2 M8.2 0.8 L0.8 7.2" stroke="#8e99ab" stroke-width="1.6"/></svg>
<div class="abs" style="left:1852px;top:131.5px;width:16px;height:16px;border-radius:8px;background:#3b78c3"></div>
<div class="t " style="left:1856.5px;top:132px;font-weight:bold;font-size:12px;color:#fff;letter-spacing:0;line-height:17px;">?</div>
<div style="position:absolute;left:855px;top:130px;width:45px;height:21px;background:#686868;"></div>
<div class="t s" style="left:577px;top:132px;width:600px;text-align:center;;letter-spacing:-0.658px;">File</div>
<div style="position:absolute;left:909px;top:130px;width:56px;height:22px;background:#f4f4f4;"></div>
<div class="t s" style="left:636.5px;top:133px;width:600px;text-align:center;color:#333;letter-spacing:-0.922px;">Home</div>
<div class="t s" style="left:702px;top:133px;width:600px;text-align:center;;letter-spacing:0.089px;">Insert</div>
<div class="t s" style="left:765.5px;top:133px;width:600px;text-align:center;;letter-spacing:-0.73px;">View</div>
<div style="position:absolute;left:901px;top:155px;width:1px;height:86px;background:#c8c8c8;"></div>
<div style="position:absolute;left:980px;top:155px;width:1px;height:86px;background:#c8c8c8;"></div>
<div style="position:absolute;left:1145px;top:155px;width:1px;height:86px;background:#c8c8c8;"></div>
<div style="position:absolute;left:1273px;top:155px;width:1px;height:86px;background:#c8c8c8;"></div>
<div style="position:absolute;left:1386px;top:155px;width:1px;height:86px;background:#c8c8c8;"></div>
<div style="position:absolute;left:1551px;top:155px;width:1px;height:86px;background:#c8c8c8;"></div>
<div style="position:absolute;left:1633px;top:155px;width:1px;height:86px;background:#c8c8c8;"></div>
<div class="t r" style="left:577px;top:227px;width:600px;text-align:center;;letter-spacing:-0.234px;">Views</div>
<div class="t r" style="left:643px;top:227px;width:600px;text-align:center;;letter-spacing:-0.026px;">Clipboard</div>
<div class="t r" style="left:757.5px;top:227px;width:600px;text-align:center;;letter-spacing:-0.129px;">Font</div>
<div class="t r" style="left:904px;top:227px;width:600px;text-align:center;;letter-spacing:-0.269px;">Paragraph</div>
<div class="t r" style="left:1024.5px;top:227px;width:600px;text-align:center;;letter-spacing:0.095px;">Border</div>
<div class="t r" style="left:1164px;top:227px;width:600px;text-align:center;;letter-spacing:-0.201px;">Number</div>
<div class="t r" style="left:1293.5px;top:227px;width:600px;text-align:center;;letter-spacing:0.128px;">Layout</div>
<svg style="left:1134px;top:230px" width="9" height="9" viewBox="0 0 9 9"><path d="M0.5 6 V0.5 H6" stroke="#9ab0d0" fill="none"/><path d="M3 3 L7.5 7.5 M7.5 4 V7.5 H4" stroke="#9ab0d0" fill="none" stroke-width="1.2"/></svg>
<svg style="left:1262px;top:230px" width="9" height="9" viewBox="0 0 9 9"><path d="M0.5 6 V0.5 H6" stroke="#9ab0d0" fill="none"/><path d="M3 3 L7.5 7.5 M7.5 4 V7.5 H4" stroke="#9ab0d0" fill="none" stroke-width="1.2"/></svg>
<svg style="left:1375px;top:230px" width="9" height="9" viewBox="0 0 9 9"><path d="M0.5 6 V0.5 H6" stroke="#9ab0d0" fill="none"/><path d="M3 3 L7.5 7.5 M7.5 4 V7.5 H4" stroke="#9ab0d0" fill="none" stroke-width="1.2"/></svg>
<svg style="left:1540px;top:230px" width="9" height="9" viewBox="0 0 9 9"><path d="M0.5 6 V0.5 H6" stroke="#9ab0d0" fill="none"/><path d="M3 3 L7.5 7.5 M7.5 4 V7.5 H4" stroke="#9ab0d0" fill="none" stroke-width="1.2"/></svg>
<div class="abs" style="left:860px;top:156px;width:38px;height:70px;border:1px dotted #000"></div>
<svg style="left:866px;top:160px" width="30" height="32" viewBox="0 0 30 32">
<rect x="1.5" y="1.5" width="22" height="27" fill="#fff" stroke="#6a6a6a"/>
<path d="M4 6.5h6" stroke="#3b78c3"/><path d="M4 9.5h6M12 6.5h8M12 9.5h8" stroke="#9a9a9a"/>
<rect x="5" y="18" width="2" height="4" fill="#3b78c3"/><rect x="8" y="15" width="2" height="7" fill="#e8a33d"/>
<path d="M4.5 12.5 V22.5" stroke="#9a9a9a"/>
<path d="M11 20 a4 4 0 0 0 1 6" stroke="#e8a33d" fill="none" stroke-width="1.5"/>
<circle cx="20.5" cy="22.5" r="7.6" fill="#fff" stroke="#6a6a6a"/>
<path d="M17.8 18 L25 22.5 L17.8 27 Z" fill="#4f9a74"/></svg>
<div class="t r" style="left:578.5px;top:193px;width:600px;text-align:center;;letter-spacing:-0.836px;">Run</div>
<svg style="left:918px;top:160px" width="30" height="32" viewBox="0 0 30 32">
<rect x="1" y="4" width="22" height="25" fill="#e2e2e2"/>
<path d="M6 7 V4.5 H9.5 a2.5 2.5 0 0 1 5 0 H18 V7 Z" fill="#b0b0b0"/><circle cx="12" cy="4" r="1.1" fill="#f4f4f4"/>
<path d="M14.5 12.5 H23 L28.5 18 V30.5 H14.5 Z" fill="#fff" stroke="#c2c2c2"/><path d="M23 12.5 V18 H28.5" fill="none" stroke="#c2c2c2"/></svg>
<div class="t rg" style="left:631px;top:193px;width:600px;text-align:center;;letter-spacing:-0.364px;">Paste</div>
<svg style="left:956px;top:159px" width="16" height="16" viewBox="0 0 16 16"><g stroke="#b4b4b4" fill="none" stroke-width="1.3"><path d="M3 0.5 L11.5 11 M13 0.5 L4.5 11"/><circle cx="3.5" cy="12.5" r="2.3"/><circle cx="12.5" cy="12.5" r="2.3"/></g></svg>
<svg style="left:955px;top:182px" width="17" height="16" viewBox="0 0 17 16"><g stroke="#b4b4b4" fill="#f4f4f4"><path d="M1.5 1.5 H6 L9 4.5 V10.5 H1.5 Z"/><path d="M7.5 5.5 H12 L15.5 8.5 V14.5 H7.5 Z"/></g><path d="M3 5.5h3M3 7.5h3M9.5 9.5h4M9.5 11.5h4" stroke="#b4b4b4"/></svg>
<div class="abs" style="left:991px;top:163px;width:103px;height:21px;border:1px solid #c6c6c6;background:#fff"></div>
<div style="position:absolute;left:994px;top:166px;width:80px;height:15px;background:#efefef;"></div>
<svg style="left:1081px;top:171px" width="8" height="5" viewBox="0 0 8 5"><path d="M0.5 0.5 L4 4 L7.5 0.5" stroke="#8c8c8c" fill="none" stroke-width="1.1"/></svg>
<div class="abs" style="left:1098px;top:163px;width:44px;height:21px;border:1px solid #c6c6c6;background:#fff"></div>
<div style="position:absolute;left:1101px;top:166px;width:21px;height:15px;background:#efefef;"></div>
<svg style="left:1129px;top:171px" width="8" height="5" viewBox="0 0 8 5"><path d="M0.5 0.5 L4 4 L7.5 0.5" stroke="#8c8c8c" fill="none" stroke-width="1.1"/></svg>
<div class="abs" style="left:1284px;top:163px;width:64px;height:21px;border:1px solid #c6c6c6;background:#fff"></div>
<div style="position:absolute;left:1287px;top:166px;width:41px;height:15px;background:#efefef;"></div>
<svg style="left:1335px;top:171px" width="8" height="5" viewBox="0 0 8 5"><path d="M0.5 0.5 L4 4 L7.5 0.5" stroke="#8c8c8c" fill="none" stroke-width="1.1"/></svg>
<div class="t r" style="left:1288px;top:166px;color:#666;line-height:15px;letter-spacing:-0.272px;">1 pt</div>
<div class="abs" style="left:1398px;top:163px;width:150px;height:21px;border:1px solid #c6c6c6;background:#fff"></div>
<div style="position:absolute;left:1401px;top:166px;width:127px;height:15px;background:#efefef;"></div>
<svg style="left:1535px;top:171px" width="8" height="5" viewBox="0 0 8 5"><path d="M0.5 0.5 L4 4 L7.5 0.5" stroke="#8c8c8c" fill="none" stroke-width="1.1"/></svg>
<div class="t " style="left:997px;top:194px;font-family:Liberation Serif,serif;font-weight:bold;font-size:14px;color:#8c8c8c;line-height:17px;letter-spacing:0;">B</div>
<div style="position:absolute;left:1012px;top:193px;width:1px;height:20px;background:#c8c8c8;"></div>
<div class="t " style="left:1019px;top:194px;font-family:Liberation Serif,serif;font-weight:bold;font-style:italic;font-size:14px;color:#8c8c8c;line-height:17px;letter-spacing:0;">I</div>
<div style="position:absolute;left:1034px;top:193px;width:1px;height:20px;background:#c8c8c8;"></div>
<div class="t " style="left:1040px;top:194px;font-family:Liberation Serif,serif;font-weight:bold;font-size:13px;color:#8c8c8c;line-height:17px;letter-spacing:0;text-decoration:underline;">U</div>
<div class="t " style="left:1066px;top:190px;font-family:Liberation Serif,serif;font-size:17px;color:#9fb3d1;line-height:19px;letter-spacing:0;">A</div>
<div style="position:absolute;left:1063px;top:207px;width:17px;height:5px;background:#d2d2d2;"></div>
<svg style="left:1085px;top:201px" width="5" height="3" viewBox="0 0 5 3"><path d="M0 0 H5 L2.5 3 Z" fill="#9ab0d0"/></svg>
<div class="t " style="left:1101px;top:192px;font-family:Liberation Serif,serif;font-size:16px;color:#8c8c8c;line-height:19px;letter-spacing:0;">A</div>
<svg style="left:1111px;top:196px" width="5" height="3" viewBox="0 0 5 3"><path d="M0 3 H5 L2.5 0 Z" fill="#9ab0d0"/></svg>
<div style="position:absolute;left:1119px;top:193px;width:1px;height:20px;background:#c8c8c8;"></div>
<div class="t " style="left:1124px;top:195px;font-family:Liberation Serif,serif;font-size:12px;color:#8c8c8c;line-height:19px;letter-spacing:0;">A</div>
<svg style="left:1132px;top:197px" width="5" height="3" viewBox="0 0 5 3"><path d="M0 0 H5 L2.5 3 Z" fill="#9ab0d0"/></svg>
<div style="position:absolute;left:1160.0px;top:167px;width:14px;height:1px;background:#8f8f8f;"></div>
<div style="position:absolute;left:1162.0px;top:169px;width:10px;height:1px;background:#8f8f8f;"></div>
<div style="position:absolute;left:1160.0px;top:171px;width:14px;height:1px;background:#8f8f8f;"></div>
<div style="position:absolute;left:1162.0px;top:173px;width:10px;height:1px;background:#8f8f8f;"></div>
<div style="position:absolute;left:1177px;top:164px;width:1px;height:20px;background:#c8c8c8;"></div>
<div style="position:absolute;left:1182.0px;top:171px;width:14px;height:1px;background:#8f8f8f;"></div>
<div style="position:absolute;left:1184.0px;top:173px;width:10px;height:1px;background:#8f8f8f;"></div>
<div style="position:absolute;left:1182.0px;top:175px;width:14px;height:1px;background:#8f8f8f;"></div>
<div style="position:absolute;left:1184.0px;top:177px;width:10px;height:1px;background:#8f8f8f;"></div>
<div style="position:absolute;left:1199px;top:164px;width:1px;height:20px;background:#c8c8c8;"></div>
<div style="position:absolute;left:1204.0px;top:175px;width:14px;height:1px;background:#8f8f8f;"></div>
<div style="position:absolute;left:1206.0px;top:177px;width:10px;height:1px;background:#8f8f8f;"></div>
<div style="position:absolute;left:1204.0px;top:179px;width:14px;height:1px;background:#8f8f8f;"></div>
<div style="position:absolute;left:1206.0px;top:181px;width:10px;height:1px;background:#8f8f8f;"></div>
<div style="position:absolute;left:1236px;top:167px;width:1px;height:15px;background:repeating-linear-gradient(180deg,#8f8f8f 0 1px,transparent 1px 2px)"></div>
<div style="position:absolute;left:1231px;top:169px;width:4px;height:1px;background:#8f8f8f;"></div>
<div style="position:absolute;left:1236px;top:169px;width:9px;height:1px;background:#8f8f8f;"></div>
<div style="position:absolute;left:1236px;top:171px;width:9px;height:2px;background:#8f8f8f;"></div>
<div style="position:absolute;left:1236px;top:174px;width:6px;height:2px;background:#8f8f8f;"></div>
<div style="position:absolute;left:1231px;top:177px;width:4px;height:1px;background:#8f8f8f;"></div>
<div style="position:absolute;left:1236px;top:177px;width:9px;height:1px;background:#8f8f8f;"></div>
<div style="position:absolute;left:1231px;top:179px;width:4px;height:1px;background:#8f8f8f;"></div>
<div style="position:absolute;left:1236px;top:179px;width:2px;height:1px;background:#8f8f8f;"></div>
<svg style="left:1229px;top:171px" width="6" height="6" viewBox="0 0 6 6"><path d="M6 3 H1 M3.5 0.5 L0.8 3 L3.5 5.5" stroke="#a4bbe2" fill="none" stroke-width="1.3"/></svg>
<div style="position:absolute;left:1247px;top:164px;width:1px;height:20px;background:#c8c8c8;"></div>
<div style="position:absolute;left:1258px;top:167px;width:1px;height:15px;background:repeating-linear-gradient(180deg,#8f8f8f 0 1px,transparent 1px 2px)"></div>
<div style="position:absolute;left:1253px;top:169px;width:4px;height:1px;background:#8f8f8f;"></div>
<div style="position:absolute;left:1258px;top:169px;width:9px;height:1px;background:#8f8f8f;"></div>
<div style="position:absolute;left:1258px;top:171px;width:9px;height:2px;background:#8f8f8f;"></div>
<div style="position:absolute;left:1258px;top:174px;width:6px;height:2px;background:#8f8f8f;"></div>
<div style="position:absolute;left:1253px;top:177px;width:4px;height:1px;background:#8f8f8f;"></div>
<div style="position:absolute;left:1258px;top:177px;width:9px;height:1px;background:#8f8f8f;"></div>
<div style="position:absolute;left:1253px;top:179px;width:4px;height:1px;background:#8f8f8f;"></div>
<div style="position:absolute;left:1258px;top:179px;width:2px;height:1px;background:#8f8f8f;"></div>
<svg style="left:1251px;top:171px" width="6" height="6" viewBox="0 0 6 6"><path d="M0 3 H5 M2.5 0.5 L5.2 3 L2.5 5.5" stroke="#a4bbe2" fill="none" stroke-width="1.3"/></svg>
<div style="position:absolute;left:1160px;top:198px;width:14px;height:1px;background:#8f8f8f;"></div>
<div style="position:absolute;left:1160px;top:200px;width:10px;height:1px;background:#8f8f8f;"></div>
<div style="position:absolute;left:1160px;top:202px;width:14px;height:1px;background:#8f8f8f;"></div>
<div style="position:absolute;left:1160px;top:204px;width:10px;height:1px;background:#8f8f8f;"></div>
<div style="position:absolute;left:1160px;top:206px;width:14px;height:1px;background:#8f8f8f;"></div>
<div style="position:absolute;left:1160px;top:208px;width:10px;height:1px;background:#8f8f8f;"></div>
<div style="position:absolute;left:1177px;top:194px;width:1px;height:20px;background:#c8c8c8;"></div>
<div style="position:absolute;left:1182.0px;top:198px;width:14px;height:1px;background:#8f8f8f;"></div>
<div style="position:absolute;left:1184.0px;top:200px;width:10px;height:1px;background:#8f8f8f;"></div>
<div style="position:absolute;left:1182.0px;top:202px;width:14px;height:1px;background:#8f8f8f;"></div>
<div style="position:absolute;left:1184.0px;top:204px;width:10px;height:1px;background:#8f8f8f;"></div>
<div style="position:absolute;left:1182.0px;top:206px;width:14px;height:1px;background:#8f8f8f;"></div>
<div style="position:absolute;left:1184.0px;top:208px;width:10px;height:1px;background:#8f8f8f;"></div>
<div style="position:absolute;left:1199px;top:194px;width:1px;height:20px;background:#c8c8c8;"></div>
<div style="position:absolute;left:1204px;top:198px;width:14px;height:1px;background:#8f8f8f;"></div>
<div style="position:absolute;left:1208px;top:200px;width:10px;height:1px;background:#8f8f8f;"></div>
<div style="position:absolute;left:1204px;top:202px;width:14px;height:1px;background:#8f8f8f;"></div>
<div style="position:absolute;left:1208px;top:204px;width:10px;height:1px;background:#8f8f8f;"></div>
<div style="position:absolute;left:1204px;top:206px;width:14px;height:1px;background:#8f8f8f;"></div>
<div style="position:absolute;left:1208px;top:208px;width:10px;height:1px;background:#8f8f8f;"></div>
<div class="abs" style="left:1230px;top:198px;width:3px;height:3px;border-radius:2px;background:#a6bbe0"></div>
<div style="position:absolute;left:1235px;top:199px;width:8px;height:1px;background:#8f8f8f;"></div>
<div class="abs" style="left:1230px;top:203px;width:3px;height:3px;border-radius:2px;background:#a6bbe0"></div>
<div style="position:absolute;left:1235px;top:204px;width:8px;height:1px;background:#8f8f8f;"></div>
<div class="abs" style="left:1230px;top:208px;width:3px;height:3px;border-radius:2px;background:#a6bbe0"></div>
<div style="position:absolute;left:1235px;top:209px;width:8px;height:1px;background:#8f8f8f;"></div>
<div style="position:absolute;left:1247px;top:194px;width:1px;height:20px;background:#c8c8c8;"></div>
<svg style="left:1252px;top:196.5px" width="4" height="15" viewBox="0 0 4 15"><g stroke="#8fa8d8" fill="none" stroke-width="1.1"><path d="M0.5 1.6 L2 0.5 V4 M0.5 4 H3.4"/><path d="M0.4 6.2 Q1.6 4.7 2.8 6 Q3 7.2 0.5 9 H3.4"/><path d="M0.4 10.5 H2.9 L1.5 12 Q3.2 12.2 2.8 13.5 Q1.8 14.6 0.3 13.8"/></g></svg>
<div style="position:absolute;left:1257px;top:198px;width:9px;height:1px;background:#8f8f8f;"></div>
<div style="position:absolute;left:1257px;top:203px;width:9px;height:1px;background:#8f8f8f;"></div>
<div style="position:absolute;left:1257px;top:208px;width:9px;height:1px;background:#8f8f8f;"></div>
<svg style="left:1352px;top:165px" width="18" height="18" viewBox="0 0 18 18"><path d="M7.5 1.5 L14 7.5 L8 12.5 L2.5 7 Z" fill="#fff" stroke="#8fa6c8" stroke-width="1.2"/><path d="M7.5 1.5 V6" stroke="#8fa6c8"/><path d="M14.5 8 q2 2.5 0.5 4 q-1.5 -1.5 -0.5 -4" fill="#8fa6c8"/><rect x="0" y="13" width="17" height="5" fill="#d2d2d2"/></svg>
<svg style="left:1374px;top:172px" width="5" height="3" viewBox="0 0 5 3"><path d="M0 0 H5 L2.5 3 Z" fill="#9ab0d0"/></svg>
<div style="position:absolute;left:1287px;top:204px;width:15px;height:1px;background:#8c8c8c;"></div>
<svg style="left:1308px;top:202px" width="5" height="3" viewBox="0 0 5 3"><path d="M0 0 H5 L2.5 3 Z" fill="#9ab0d0"/></svg>
<div style="position:absolute;left:1316px;top:193px;width:1px;height:20px;background:#c8c8c8;"></div>
<svg style="left:1319px;top:195px" width="18" height="18" viewBox="0 0 18 18"><path d="M13.5 1 q2 0 2.5 2 L9 10 L6.5 8 Z" fill="#b8c8e0" stroke="#8fa6c8" stroke-width="0.8"/><path d="M6.5 8 L9 10 q-2 3 -7 2 q3 -1 5 -4" fill="#9ab0d0"/><rect x="0" y="13" width="17" height="5" fill="#d2d2d2"/></svg>
<svg style="left:1341px;top:202px" width="5" height="3" viewBox="0 0 5 3"><path d="M0 0 H5 L2.5 3 Z" fill="#9ab0d0"/></svg>
<div style="position:absolute;left:1349px;top:193px;width:1px;height:20px;background:#c8c8c8;"></div>
<div class="abs" style="left:1354px;top:197px;width:14px;height:13px;border:1px solid #8c8c8c"></div>
<div style="position:absolute;left:1356px;top:203px;width:10px;height:1px;background:repeating-linear-gradient(90deg,#b0b0b0 0 1px,transparent 1px 2px)"></div>
<div style="position:absolute;left:1360px;top:199px;width:1px;height:9px;background:repeating-linear-gradient(180deg,#b0b0b0 0 1px,transparent 1px 2px)"></div>
<svg style="left:1374px;top:202px" width="5" height="3" viewBox="0 0 5 3"><path d="M0 0 H5 L2.5 3 Z" fill="#9ab0d0"/></svg>
<div class="abs" style="left:1401px;top:197px;width:16px;height:12px;border:1px solid #222;border-top-color:transparent;border-bottom-color:transparent"></div>
<div style="position:absolute;left:1401px;top:197px;width:4px;height:1px;background:#222;"></div>
<div style="position:absolute;left:1413px;top:197px;width:4px;height:1px;background:#222;"></div>
<div style="position:absolute;left:1401px;top:208px;width:4px;height:1px;background:#222;"></div>
<div style="position:absolute;left:1413px;top:208px;width:4px;height:1px;background:#222;"></div>
<div class="t " style="left:1403px;top:195px;font-family:Liberation Serif,serif;font-weight:bold;font-size:8.5px;color:#111;line-height:17px;letter-spacing:-0.3px;">123</div>
<svg style="left:1422px;top:201px" width="5" height="3" viewBox="0 0 5 3"><path d="M0 0 H5 L2.5 3 Z" fill="#2b68b5"/></svg>
<div class="t " style="left:1441px;top:194px;font-family:Liberation Serif,serif;font-size:15px;color:#8c8c8c;line-height:19px;letter-spacing:0;">$</div>
<div style="position:absolute;left:1455px;top:193px;width:1px;height:20px;background:#c8c8c8;"></div>
<div class="t " style="left:1460px;top:193px;font-size:13px;color:#8c8c8c;line-height:19px;letter-spacing:0;">%</div>
<div style="position:absolute;left:1477px;top:193px;width:1px;height:20px;background:#c8c8c8;"></div>
<div class="t " style="left:1486px;top:188px;font-family:Liberation Serif,serif;font-weight:bold;font-size:17px;color:#8c8c8c;line-height:19px;letter-spacing:0;">,</div>
<div class="t " style="left:1512px;top:194.5px;font-size:8px;color:#9a9a9a;line-height:10px;letter-spacing:0;">.0</div>
<div class="t " style="left:1509px;top:201.5px;font-size:8px;color:#9a9a9a;line-height:10px;letter-spacing:0;">.00</div>
<svg style="left:1506px;top:197px" width="6" height="6" viewBox="0 0 6 6"><path d="M6 3 H1 M3 0.8 L0.8 3 L3 5.2" stroke="#9ab0d0" fill="none" stroke-width="1.1"/></svg>
<div style="position:absolute;left:1525px;top:193px;width:1px;height:20px;background:#c8c8c8;"></div>
<div class="t " style="left:1531px;top:194.5px;font-size:8px;color:#9a9a9a;line-height:10px;letter-spacing:0;">.00</div>
<div class="t " style="left:1536px;top:201.5px;font-size:8px;color:#9a9a9a;line-height:10px;letter-spacing:0;">.0</div>
<svg style="left:1529px;top:204px" width="6" height="6" viewBox="0 0 6 6"><path d="M0 3 H5 M3 0.8 L5.2 3 L3 5.2" stroke="#9ab0d0" fill="none" stroke-width="1.1"/></svg>
<svg style="left:1567px;top:160px" width="17" height="15" viewBox="0 0 17 15"><rect x="6" y="0" width="5" height="14" fill="#d8d8d8"/><path d="M4 3.5 H0.5 V13.5 H4 M13 3.5 H16.5 V13.5 H13" stroke="#9a9a9a" fill="none"/><path d="M3 6 L6 8.5 L3 11 Z M14 6 L11 8.5 L14 11 Z" fill="#c4c4c4"/></svg>
<div class="t rg" style="left:1588px;top:160px;color:#777;letter-spacing:-0.102px;">Merge</div>
<svg style="left:1567px;top:183px" width="17" height="16" viewBox="0 0 17 16"><path d="M4 5.5 H0.5 V15.5 H4 M13 5.5 H16.5 V15.5 H13" stroke="#9a9a9a" fill="none"/><rect x="2" y="7" width="3" height="8" fill="#e4e4e4"/><rect x="12" y="7" width="3" height="8" fill="#e4e4e4"/><path d="M8.5 3 V15" stroke="#c4c4c4"/><path d="M6.5 0 H10.5 L8.5 2.5 Z" fill="#a0a0a0"/></svg>
<div class="t rg" style="left:1588px;top:184px;color:#777;letter-spacing:0.065px;">Split</div>
<svg style="left:1570px;top:207px" width="14" height="16" viewBox="0 0 14 16"><path d="M1.5 0 V15" stroke="#444"/><rect x="4" y="1.5" width="6" height="3" fill="#fff" stroke="#666"/><rect x="4" y="6" width="9" height="3.5" fill="#c0c0c0"/><path d="M11 12.5 H4 M6.5 10 L4 12.5 L6.5 15" stroke="#444" fill="none" stroke-width="1.2"/></svg>
<div class="t r" style="left:1588px;top:208px;color:#444;letter-spacing:0.044px;">Align</div>
<svg style="left:1620px;top:213px" width="5" height="3" viewBox="0 0 5 3"><path d="M0 0 H5 L2.5 3 Z" fill="#2b68b5"/></svg>
<div class="t s" style="left:858px;top:250px;line-height:17px;letter-spacing:-0.038px;">Report Data</div>
<svg style="left:1036px;top:253px" width="9" height="9" viewBox="0 0 9 9"><path d="M1 1 L8 8 M8 1 L1 8" stroke="#fff" stroke-width="2"/></svg>
<div style="position:absolute;left:852px;top:269px;width:200px;height:24px;background:#444;"></div>
<div class="t s" style="left:857px;top:272px;font-size:12.5px;line-height:17px;letter-spacing:-0.439px;">New</div>
<svg style="left:887px;top:280px" width="5" height="3" viewBox="0 0 5 3"><path d="M0 0 H5 L2.5 3 Z" fill="#1a1a1a"/></svg>
<div class="t s" style="left:901px;top:272px;font-size:12.5px;color:#767676;line-height:17px;letter-spacing:-0.467px;">Edit...</div>
<svg style="left:941px;top:275px" width="12" height="12" viewBox="0 0 12 12"><path d="M1.5 1.5 L10.5 10.5 M10.5 1.5 L1.5 10.5" stroke="#999" stroke-width="2.4"/></svg>
<svg style="left:965px;top:276px" width="10" height="10" viewBox="0 0 10 10"><path d="M5 0 L10 5 H7.5 V9.5 H2.5 V5 H0 Z" fill="#8a8a8a"/></svg>
<svg style="left:988px;top:276px" width="10" height="10" viewBox="0 0 10 10"><path d="M5 10 L10 5 H7.5 V0.5 H2.5 V5 H0 Z" fill="#8a8a8a"/></svg>
<div style="position:absolute;left:852px;top:293px;width:200px;height:566px;background:#fff;"></div>
<div class="abs" style="left:859px;top:300px;width:9px;height:9px;border:1px solid #8c8c8c;background:#fff"></div>
<div style="position:absolute;left:861px;top:304px;width:5px;height:1px;background:#2b4a8b;"></div>
<div style="position:absolute;left:863px;top:302px;width:1px;height:5px;background:#2b4a8b;"></div>
<svg style="left:874px;top:296px" width="16" height="13" viewBox="0 0 16 13"><path d="M0 3 L9 0.4 H15 V13 H0 Z" fill="#e9bf7c"/><path d="M10 1.4 H14" stroke="#fbe9c8" stroke-width="0.8"/></svg>
<div class="t " style="left:895px;top:294.3px;font-size:11.2px;line-height:18px;color:#000;letter-spacing:0.223px;">Built-in Fields</div>
<svg style="left:874px;top:314px" width="16" height="13" viewBox="0 0 16 13"><path d="M0 3 L9 0.4 H15 V13 H0 Z" fill="#e9bf7c"/><path d="M10 1.4 H14" stroke="#fbe9c8" stroke-width="0.8"/></svg>
<div class="t " style="left:895px;top:312.3px;font-size:11.2px;line-height:18px;color:#000;letter-spacing:-0.263px;">Parameters</div>
<svg style="left:874px;top:332px" width="16" height="13" viewBox="0 0 16 13"><path d="M0 3 L9 0.4 H15 V13 H0 Z" fill="#e9bf7c"/><path d="M10 1.4 H14" stroke="#fbe9c8" stroke-width="0.8"/></svg>
<div class="t " style="left:895px;top:330.3px;font-size:11.2px;line-height:18px;color:#000;letter-spacing:-0.148px;">Images</div>
<div class="abs" style="left:859px;top:354px;width:9px;height:9px;border:1px solid #8c8c8c;background:#fff"></div>
<div style="position:absolute;left:861px;top:358px;width:5px;height:1px;background:#2b4a8b;"></div>
<div style="position:absolute;left:863px;top:356px;width:1px;height:5px;background:#2b4a8b;"></div>
<svg style="left:874px;top:350px" width="16" height="13" viewBox="0 0 16 13"><path d="M0 3 L9 0.4 H15 V13 H0 Z" fill="#e9bf7c"/><path d="M10 1.4 H14" stroke="#fbe9c8" stroke-width="0.8"/></svg>
<div class="t " style="left:895px;top:348.3px;font-size:11.2px;line-height:18px;color:#000;letter-spacing:-0.123px;">Data Sources</div>
<div class="abs" style="left:859px;top:372px;width:9px;height:9px;border:1px solid #8c8c8c;background:#fff"></div>
<div style="position:absolute;left:861px;top:376px;width:5px;height:1px;background:#2b4a8b;"></div>
<div style="position:absolute;left:863px;top:374px;width:1px;height:5px;background:#2b4a8b;"></div>
<svg style="left:874px;top:368px" width="16" height="13" viewBox="0 0 16 13"><path d="M0 3 L9 0.4 H15 V13 H0 Z" fill="#e9bf7c"/><path d="M10 1.4 H14" stroke="#fbe9c8" stroke-width="0.8"/></svg>
<div class="t " style="left:895px;top:366.3px;font-size:11.2px;line-height:18px;color:#000;letter-spacing:-0.082px;">Datasets</div>
<div class="abs" style="left:1055px;top:250px;width:814px;height:461px;background:#a7a7a7;overflow:hidden"><div class="abs" style="left:-1055px;top:-250px;width:1878px;height:895px">
<div style="position:absolute;left:1080px;top:270px;width:772px;height:441px;background:#787878;"></div>
<div style="position:absolute;left:1055px;top:246px;width:1px;height:5px;background:#8a8a8a;"></div>
<div style="position:absolute;left:1101px;top:251px;width:688px;height:14px;background:#fff;"></div>
<div style="position:absolute;left:1061px;top:291px;width:14px;height:420px;background:#fff;"></div>
<div style="position:absolute;left:1056px;top:695px;width:24px;height:3px;background:#ececec;"></div>
<div style="position:absolute;left:1058px;top:283px;width:21px;height:1px;background:#111;"></div>
<div style="position:absolute;left:1283px;top:250px;width:1px;height:19px;background:#111;"></div>
<div style="position:absolute;left:1120px;top:256px;width:1px;height:3px;background:#222;"></div>
<div style="position:absolute;left:1067px;top:310px;width:3px;height:1px;background:#222;"></div>
<div style="position:absolute;left:1158px;top:256px;width:1px;height:3px;background:#222;"></div>
<div style="position:absolute;left:1067px;top:348px;width:3px;height:1px;background:#222;"></div>
<div style="position:absolute;left:1195px;top:256px;width:1px;height:3px;background:#222;"></div>
<div style="position:absolute;left:1067px;top:385px;width:3px;height:1px;background:#222;"></div>
<div style="position:absolute;left:1233px;top:256px;width:1px;height:3px;background:#222;"></div>
<div style="position:absolute;left:1067px;top:423px;width:3px;height:1px;background:#222;"></div>
<div style="position:absolute;left:1271px;top:256px;width:1px;height:3px;background:#222;"></div>
<div style="position:absolute;left:1067px;top:461px;width:3px;height:1px;background:#222;"></div>
<div style="position:absolute;left:1309px;top:256px;width:1px;height:3px;background:#222;"></div>
<div style="position:absolute;left:1067px;top:499px;width:3px;height:1px;background:#222;"></div>
<div style="position:absolute;left:1347px;top:256px;width:1px;height:3px;background:#222;"></div>
<div style="position:absolute;left:1067px;top:537px;width:3px;height:1px;background:#222;"></div>
<div style="position:absolute;left:1384px;top:256px;width:1px;height:3px;background:#222;"></div>
<div style="position:absolute;left:1067px;top:574px;width:3px;height:1px;background:#222;"></div>
<div style="position:absolute;left:1422px;top:256px;width:1px;height:3px;background:#222;"></div>
<div style="position:absolute;left:1067px;top:612px;width:3px;height:1px;background:#222;"></div>
<div style="position:absolute;left:1460px;top:256px;width:1px;height:3px;background:#222;"></div>
<div style="position:absolute;left:1067px;top:650px;width:3px;height:1px;background:#222;"></div>
<div style="position:absolute;left:1498px;top:256px;width:1px;height:3px;background:#222;"></div>
<div style="position:absolute;left:1067px;top:688px;width:3px;height:1px;background:#222;"></div>
<div style="position:absolute;left:1536px;top:256px;width:1px;height:3px;background:#222;"></div>
<div style="position:absolute;left:1573px;top:256px;width:1px;height:3px;background:#222;"></div>
<div style="position:absolute;left:1611px;top:256px;width:1px;height:3px;background:#222;"></div>
<div style="position:absolute;left:1649px;top:256px;width:1px;height:3px;background:#222;"></div>
<div style="position:absolute;left:1687px;top:256px;width:1px;height:3px;background:#222;"></div>
<div style="position:absolute;left:1725px;top:256px;width:1px;height:3px;background:#222;"></div>
<div style="position:absolute;left:1762px;top:256px;width:1px;height:3px;background:#222;"></div>
<div class="t " style="left:839.5px;top:250px;width:600px;text-align:center;font-size:11px;letter-spacing:0;line-height:16px;color:#111;">1</div>
<div class="t " style="left:877.5px;top:250px;width:600px;text-align:center;font-size:11px;letter-spacing:0;line-height:16px;color:#111;">2</div>
<div class="t " style="left:914.5px;top:250px;width:600px;text-align:center;font-size:11px;letter-spacing:0;line-height:16px;color:#111;">3</div>
<div class="t " style="left:952.5px;top:250px;width:600px;text-align:center;font-size:11px;letter-spacing:0;line-height:16px;color:#111;">4</div>
<div class="t " style="left:990.5px;top:250px;width:600px;text-align:center;font-size:11px;letter-spacing:0;line-height:16px;color:#111;">5</div>
<div class="t " style="left:1028.5px;top:250px;width:600px;text-align:center;font-size:11px;letter-spacing:0;line-height:16px;color:#111;">6</div>
<div class="t " style="left:1066.5px;top:250px;width:600px;text-align:center;font-size:11px;letter-spacing:0;line-height:16px;color:#111;">7</div>
<div class="t " style="left:1103.5px;top:250px;width:600px;text-align:center;font-size:11px;letter-spacing:0;line-height:16px;color:#111;">8</div>
<div class="t " style="left:1141.5px;top:250px;width:600px;text-align:center;font-size:11px;letter-spacing:0;line-height:16px;color:#111;">9</div>
<div class="t " style="left:1179.5px;top:250px;width:600px;text-align:center;font-size:11px;letter-spacing:0;line-height:16px;color:#111;">10</div>
<div class="t " style="left:1217.5px;top:250px;width:600px;text-align:center;font-size:11px;letter-spacing:0;line-height:16px;color:#111;">11</div>
<div class="t " style="left:1255.5px;top:250px;width:600px;text-align:center;font-size:11px;letter-spacing:0;line-height:16px;color:#111;">12</div>
<div class="t " style="left:1292.5px;top:250px;width:600px;text-align:center;font-size:11px;letter-spacing:0;line-height:16px;color:#111;">13</div>
<div class="t " style="left:1330.5px;top:250px;width:600px;text-align:center;font-size:11px;letter-spacing:0;line-height:16px;color:#111;">14</div>
<div class="t " style="left:1368.5px;top:250px;width:600px;text-align:center;font-size:11px;letter-spacing:0;line-height:16px;color:#111;">15</div>
<div class="t " style="left:1406.5px;top:250px;width:600px;text-align:center;font-size:11px;letter-spacing:0;line-height:16px;color:#111;">16</div>
<div class="t " style="left:1444.5px;top:250px;width:600px;text-align:center;font-size:11px;letter-spacing:0;line-height:16px;color:#111;">17</div>
<div class="t" style="left:1048px;top:322px;width:40px;height:16px;text-align:center;font-size:11px;letter-spacing:0;line-height:16px;color:#111;transform:rotate(-90deg)">1</div>
<div class="t" style="left:1048px;top:360px;width:40px;height:16px;text-align:center;font-size:11px;letter-spacing:0;line-height:16px;color:#111;transform:rotate(-90deg)">2</div>
<div class="t" style="left:1048px;top:397px;width:40px;height:16px;text-align:center;font-size:11px;letter-spacing:0;line-height:16px;color:#111;transform:rotate(-90deg)">3</div>
<div class="t" style="left:1048px;top:435px;width:40px;height:16px;text-align:center;font-size:11px;letter-spacing:0;line-height:16px;color:#111;transform:rotate(-90deg)">4</div>
<div class="t" style="left:1048px;top:473px;width:40px;height:16px;text-align:center;font-size:11px;letter-spacing:0;line-height:16px;color:#111;transform:rotate(-90deg)">5</div>
<div class="t" style="left:1048px;top:511px;width:40px;height:16px;text-align:center;font-size:11px;letter-spacing:0;line-height:16px;color:#111;transform:rotate(-90deg)">6</div>
<div class="t" style="left:1048px;top:549px;width:40px;height:16px;text-align:center;font-size:11px;letter-spacing:0;line-height:16px;color:#111;transform:rotate(-90deg)">7</div>
<div class="t" style="left:1048px;top:586px;width:40px;height:16px;text-align:center;font-size:11px;letter-spacing:0;line-height:16px;color:#111;transform:rotate(-90deg)">8</div>
<div class="t" style="left:1048px;top:624px;width:40px;height:16px;text-align:center;font-size:11px;letter-spacing:0;line-height:16px;color:#111;transform:rotate(-90deg)">9</div>
<div class="t" style="left:1048px;top:662px;width:40px;height:16px;text-align:center;font-size:11px;letter-spacing:0;line-height:16px;color:#111;transform:rotate(-90deg)">10</div>
<div style="position:absolute;left:1100px;top:290px;width:691px;height:422px;background:#000;"></div>
<div style="position:absolute;left:1788px;top:290px;width:3px;height:3px;background:#787878;"></div>
<div style="position:absolute;left:1101px;top:291px;width:687px;height:421px;background:#fff;"></div>
<svg style="left:1102px;top:292px" width="14" height="13" viewBox="0 0 14 13"><rect x="0" y="0" width="14" height="13" fill="#2b4a72"/><rect x="0" y="0" width="13" height="12" fill="#a9bde2"/><rect x="1" y="1" width="12" height="11" fill="#eaf1fc"/><rect x="1" y="8" width="12" height="4" fill="#d6ba6a"/><rect x="1" y="8.5" width="3" height="3.5" fill="#f0dc8c"/><circle cx="10.6" cy="4.9" r="1.9" fill="#f0a818" stroke="#a86a20" stroke-width="0.6"/><path d="M5.6 12 V2.6" stroke="#22903a" stroke-width="2.6" stroke-linecap="round"/><path d="M3 4.8 V6.6 Q3 7.6 5 7.6 M8.2 5.8 V7.4 Q8 8.6 6 8.6" stroke="#22903a" stroke-width="1.8" fill="none" stroke-linecap="round"/><path d="M5.4 3.5 V6" stroke="#8fd08f" stroke-width="0.6"/></svg>
<svg style="left:1329px;top:292px" width="14" height="13" viewBox="0 0 14 13"><rect x="0" y="0" width="14" height="13" fill="#2b4a72"/><rect x="0" y="0" width="13" height="12" fill="#a9bde2"/><rect x="1" y="1" width="12" height="11" fill="#eaf1fc"/><rect x="1" y="8" width="12" height="4" fill="#d6ba6a"/><rect x="1" y="8.5" width="3" height="3.5" fill="#f0dc8c"/><circle cx="10.6" cy="4.9" r="1.9" fill="#f0a818" stroke="#a86a20" stroke-width="0.6"/><path d="M5.6 12 V2.6" stroke="#22903a" stroke-width="2.6" stroke-linecap="round"/><path d="M3 4.8 V6.6 Q3 7.6 5 7.6 M8.2 5.8 V7.4 Q8 8.6 6 8.6" stroke="#22903a" stroke-width="1.8" fill="none" stroke-linecap="round"/><path d="M5.4 3.5 V6" stroke="#8fd08f" stroke-width="0.6"/></svg>
<svg style="left:1557px;top:292px" width="14" height="13" viewBox="0 0 14 13"><rect x="0" y="0" width="14" height="13" fill="#2b4a72"/><rect x="0" y="0" width="13" height="12" fill="#a9bde2"/><rect x="1" y="1" width="12" height="11" fill="#eaf1fc"/><rect x="1" y="8" width="12" height="4" fill="#d6ba6a"/><rect x="1" y="8.5" width="3" height="3.5" fill="#f0dc8c"/><circle cx="10.6" cy="4.9" r="1.9" fill="#f0a818" stroke="#a86a20" stroke-width="0.6"/><path d="M5.6 12 V2.6" stroke="#22903a" stroke-width="2.6" stroke-linecap="round"/><path d="M3 4.8 V6.6 Q3 7.6 5 7.6 M8.2 5.8 V7.4 Q8 8.6 6 8.6" stroke="#22903a" stroke-width="1.8" fill="none" stroke-linecap="round"/><path d="M5.4 3.5 V6" stroke="#8fd08f" stroke-width="0.6"/></svg>
<div style="position:absolute;left:1328px;top:292px;width:1px;height:53px;background:repeating-linear-gradient(180deg,#9a9a9a 0 2px,transparent 2px 3px)"></div>
<div style="position:absolute;left:1556px;top:292px;width:1px;height:53px;background:repeating-linear-gradient(180deg,#9a9a9a 0 2px,transparent 2px 3px)"></div>
<div style="position:absolute;left:1782px;top:292px;width:1px;height:53px;background:repeating-linear-gradient(180deg,#9a9a9a 0 2px,transparent 2px 3px)"></div>
<div style="position:absolute;left:1101px;top:344px;width:681px;height:1px;background:repeating-linear-gradient(90deg,#9a9a9a 0 2px,transparent 2px 3px);background-position:0px 0"></div>
<div style="position:absolute;left:1101px;top:345px;width:681px;height:1px;background:repeating-linear-gradient(90deg,#9a9a9a 0 2px,transparent 2px 3px);background-position:1px 0"></div>
<div style="position:absolute;left:1101px;top:360px;width:687px;height:1px;background:repeating-linear-gradient(90deg,#9a9a9a 0 2px,transparent 2px 3px);background-position:0px 0"></div>
<div style="position:absolute;left:1588px;top:386px;width:200px;height:1px;background:repeating-linear-gradient(90deg,#9a9a9a 0 2px,transparent 2px 3px);background-position:0px 0"></div>
<div style="position:absolute;left:1101px;top:385px;width:487px;height:1px;background:repeating-linear-gradient(90deg,#9a9a9a 0 2px,transparent 2px 3px);background-position:1px 0"></div>
<div style="position:absolute;left:1101px;top:386px;width:487px;height:1px;background:#9a9a9a;"></div>
<div class="t" style="left:1586px;top:365px;width:200.5px;text-align:right;font-weight:bold;font-size:18.5px;line-height:22px;letter-spacing:0.15px">«Expr»</div>
<div style="position:absolute;left:1101px;top:399px;width:487px;height:1px;background:repeating-linear-gradient(90deg,#9a9a9a 0 2px,transparent 2px 3px);background-position:0px 0"></div>
<div style="position:absolute;left:1101px;top:402px;width:487px;height:1px;background:repeating-linear-gradient(90deg,#9a9a9a 0 2px,transparent 2px 3px);background-position:0px 0"></div>
<div style="position:absolute;left:1101px;top:429px;width:487px;height:1px;background:repeating-linear-gradient(90deg,#9a9a9a 0 2px,transparent 2px 3px);background-position:0px 0"></div>
<div style="position:absolute;left:1101px;top:432px;width:487px;height:1px;background:repeating-linear-gradient(90deg,#9a9a9a 0 2px,transparent 2px 3px);background-position:0px 0"></div>
<div style="position:absolute;left:1101px;top:444px;width:487px;height:1px;background:repeating-linear-gradient(90deg,#9a9a9a 0 2px,transparent 2px 3px);background-position:0px 0"></div>
<div style="position:absolute;left:1101px;top:473px;width:487px;height:1px;background:repeating-linear-gradient(90deg,#9a9a9a 0 2px,transparent 2px 3px);background-position:2px 0"></div>
<div style="position:absolute;left:1101px;top:475px;width:487px;height:1px;background:repeating-linear-gradient(90deg,#9a9a9a 0 2px,transparent 2px 3px);background-position:1px 0"></div>
<div style="position:absolute;left:1101px;top:487px;width:487px;height:1px;background:repeating-linear-gradient(90deg,#9a9a9a 0 2px,transparent 2px 3px);background-position:1px 0"></div>
<div style="position:absolute;left:1101px;top:489px;width:487px;height:1px;background:repeating-linear-gradient(90deg,#9a9a9a 0 2px,transparent 2px 3px);background-position:0px 0"></div>
<div style="position:absolute;left:1101px;top:503px;width:487px;height:1px;background:repeating-linear-gradient(90deg,#9a9a9a 0 2px,transparent 2px 3px);background-position:2px 0"></div>
<div style="position:absolute;left:1101px;top:415px;width:487px;height:1px;background:#9a9a9a;"></div>
<div style="position:absolute;left:1101px;top:458px;width:487px;height:1px;background:repeating-linear-gradient(90deg,#9a9a9a 0 2px,transparent 2px 3px);background-position:0px 0"></div>
<div style="position:absolute;left:1101px;top:459px;width:487px;height:1px;background:repeating-linear-gradient(90deg,#9a9a9a 0 2px,transparent 2px 3px);background-position:1px 0"></div>
<div style="position:absolute;left:1587px;top:386px;width:1px;height:29px;background:repeating-linear-gradient(180deg,#9a9a9a 0 2px,transparent 2px 3px)"></div>
<div style="position:absolute;left:1587px;top:415px;width:1px;height:88px;background:#9a9a9a;"></div>
<div class="t e" style="left:1103.5px;top:388px;;">«Expr»</div>
<div class="t e" style="left:1103.5px;top:401px;;">«Expr»</div>
<div class="t e" style="left:1103.5px;top:417px;;">«Expr»</div>
<div class="t e" style="left:1103.5px;top:431px;;">«Expr»</div>
<div class="t e" style="left:1103.5px;top:446px;;">«Expr»</div>
<div class="t e" style="left:1103.5px;top:461px;;">«Expr»</div>
<div class="t e" style="left:1103.5px;top:475px;;">«Expr»</div>
<div class="t e" style="left:1103.5px;top:488px;;">«Expr»</div>
<div style="position:absolute;left:1588px;top:402px;width:200px;height:1px;background:repeating-linear-gradient(90deg,#9a9a9a 0 2px,transparent 2px 3px);background-position:0px 0"></div>
<div style="position:absolute;left:1588px;top:417px;width:200px;height:1px;background:repeating-linear-gradient(90deg,#9a9a9a 0 2px,transparent 2px 3px);background-position:0px 0"></div>
<div style="position:absolute;left:1588px;top:463px;width:200px;height:1px;background:repeating-linear-gradient(90deg,#9a9a9a 0 2px,transparent 2px 3px);background-position:0px 0"></div>
<div style="position:absolute;left:1588px;top:507px;width:200px;height:1px;background:repeating-linear-gradient(90deg,#9a9a9a 0 2px,transparent 2px 3px);background-position:0px 0"></div>
<div style="position:absolute;left:1588px;top:432px;width:200px;height:1px;background:repeating-linear-gradient(90deg,#9a9a9a 0 2px,transparent 2px 3px);background-position:0px 0"></div>
<div style="position:absolute;left:1588px;top:433px;width:200px;height:1px;background:repeating-linear-gradient(90deg,#9a9a9a 0 2px,transparent 2px 3px);background-position:1px 0"></div>
<div style="position:absolute;left:1588px;top:447px;width:200px;height:1px;background:repeating-linear-gradient(90deg,#9a9a9a 0 2px,transparent 2px 3px);background-position:0px 0"></div>
<div style="position:absolute;left:1588px;top:448px;width:200px;height:1px;background:repeating-linear-gradient(90deg,#9a9a9a 0 2px,transparent 2px 3px);background-position:1px 0"></div>
<div style="position:absolute;left:1588px;top:492px;width:200px;height:1px;background:repeating-linear-gradient(90deg,#9a9a9a 0 2px,transparent 2px 3px);background-position:0px 0"></div>
<div style="position:absolute;left:1588px;top:493px;width:200px;height:1px;background:repeating-linear-gradient(90deg,#9a9a9a 0 2px,transparent 2px 3px);background-position:1px 0"></div>
<div style="position:absolute;left:1588px;top:479px;width:200px;height:1px;background:#9a9a9a;"></div>
<div class="t er" style="left:1726px;top:389px;;">«Expr»</div>
<div class="t er" style="left:1726px;top:420px;;">«Expr»</div>
<div class="t er" style="left:1726px;top:435px;;">«Expr»</div>
<div class="t er" style="left:1726px;top:450px;;">«Expr»</div>
<div class="t er" style="left:1726px;top:465px;;">«Expr»</div>
<div class="t er" style="left:1726px;top:480px;;">«Expr»</div>
<div class="t er" style="left:1726px;top:494px;;">«Expr»</div>
<div style="position:absolute;left:1101px;top:517px;width:455px;height:1px;background:repeating-linear-gradient(90deg,#9a9a9a 0 2px,transparent 2px 3px);background-position:0px 0"></div>
<div style="position:absolute;left:1101px;top:675px;width:455px;height:1px;background:repeating-linear-gradient(90deg,#9a9a9a 0 2px,transparent 2px 3px);background-position:0px 0"></div>
<div style="position:absolute;left:1222px;top:517px;width:1px;height:158px;background:repeating-linear-gradient(180deg,#9a9a9a 0 2px,transparent 2px 3px)"></div>
<div style="position:absolute;left:1555px;top:517px;width:1px;height:158px;background:repeating-linear-gradient(180deg,#9a9a9a 0 2px,transparent 2px 3px)"></div>
<div style="position:absolute;left:1101px;top:531px;width:121px;height:1px;background:#9a9a9a;"></div>
<div style="position:absolute;left:1101px;top:575px;width:121px;height:1px;background:#9a9a9a;"></div>
<div style="position:absolute;left:1101px;top:647px;width:121px;height:1px;background:#9a9a9a;"></div>
<div style="position:absolute;left:1101px;top:544px;width:121px;height:1px;background:repeating-linear-gradient(90deg,#9a9a9a 0 2px,transparent 2px 3px);background-position:0px 0"></div>
<div style="position:absolute;left:1101px;top:545px;width:121px;height:1px;background:repeating-linear-gradient(90deg,#9a9a9a 0 2px,transparent 2px 3px);background-position:1px 0"></div>
<div style="position:absolute;left:1101px;top:558px;width:121px;height:1px;background:repeating-linear-gradient(90deg,#9a9a9a 0 2px,transparent 2px 3px);background-position:0px 0"></div>
<div style="position:absolute;left:1101px;top:559px;width:121px;height:1px;background:repeating-linear-gradient(90deg,#9a9a9a 0 2px,transparent 2px 3px);background-position:1px 0"></div>
<div style="position:absolute;left:1101px;top:590px;width:121px;height:1px;background:repeating-linear-gradient(90deg,#9a9a9a 0 2px,transparent 2px 3px);background-position:0px 0"></div>
<div style="position:absolute;left:1101px;top:591px;width:121px;height:1px;background:repeating-linear-gradient(90deg,#9a9a9a 0 2px,transparent 2px 3px);background-position:1px 0"></div>
<div style="position:absolute;left:1101px;top:660px;width:121px;height:1px;background:repeating-linear-gradient(90deg,#9a9a9a 0 2px,transparent 2px 3px);background-position:0px 0"></div>
<div style="position:absolute;left:1101px;top:661px;width:121px;height:1px;background:repeating-linear-gradient(90deg,#9a9a9a 0 2px,transparent 2px 3px);background-position:1px 0"></div>
<div style="position:absolute;left:1101px;top:605px;width:121px;height:1px;background:repeating-linear-gradient(90deg,#9a9a9a 0 2px,transparent 2px 3px);background-position:0px 0"></div>
<div style="position:absolute;left:1101px;top:617px;width:121px;height:1px;background:repeating-linear-gradient(90deg,#9a9a9a 0 2px,transparent 2px 3px);background-position:0px 0"></div>
<div style="position:absolute;left:1101px;top:633px;width:121px;height:1px;background:repeating-linear-gradient(90deg,#9a9a9a 0 2px,transparent 2px 3px);background-position:0px 0"></div>
<div style="position:absolute;left:1222px;top:531px;width:334px;height:1px;background:repeating-linear-gradient(90deg,#9a9a9a 0 2px,transparent 2px 3px);background-position:0px 0"></div>
<div style="position:absolute;left:1222px;top:532px;width:334px;height:1px;background:repeating-linear-gradient(90deg,#9a9a9a 0 2px,transparent 2px 3px);background-position:1px 0"></div>
<div style="position:absolute;left:1222px;top:544px;width:334px;height:1px;background:repeating-linear-gradient(90deg,#9a9a9a 0 2px,transparent 2px 3px);background-position:0px 0"></div>
<div style="position:absolute;left:1222px;top:545px;width:334px;height:1px;background:repeating-linear-gradient(90deg,#9a9a9a 0 2px,transparent 2px 3px);background-position:1px 0"></div>
<div style="position:absolute;left:1222px;top:558px;width:334px;height:1px;background:repeating-linear-gradient(90deg,#9a9a9a 0 2px,transparent 2px 3px);background-position:0px 0"></div>
<div style="position:absolute;left:1222px;top:559px;width:334px;height:1px;background:repeating-linear-gradient(90deg,#9a9a9a 0 2px,transparent 2px 3px);background-position:1px 0"></div>
<div style="position:absolute;left:1222px;top:589px;width:334px;height:1px;background:repeating-linear-gradient(90deg,#9a9a9a 0 2px,transparent 2px 3px);background-position:0px 0"></div>
<div style="position:absolute;left:1222px;top:590px;width:334px;height:1px;background:repeating-linear-gradient(90deg,#9a9a9a 0 2px,transparent 2px 3px);background-position:1px 0"></div>
<div style="position:absolute;left:1222px;top:604px;width:334px;height:1px;background:repeating-linear-gradient(90deg,#9a9a9a 0 2px,transparent 2px 3px);background-position:0px 0"></div>
<div style="position:absolute;left:1222px;top:605px;width:334px;height:1px;background:repeating-linear-gradient(90deg,#9a9a9a 0 2px,transparent 2px 3px);background-position:1px 0"></div>
<div style="position:absolute;left:1222px;top:617px;width:334px;height:1px;background:repeating-linear-gradient(90deg,#9a9a9a 0 2px,transparent 2px 3px);background-position:0px 0"></div>
<div style="position:absolute;left:1222px;top:618px;width:334px;height:1px;background:repeating-linear-gradient(90deg,#9a9a9a 0 2px,transparent 2px 3px);background-position:1px 0"></div>
<div style="position:absolute;left:1222px;top:632px;width:334px;height:1px;background:repeating-linear-gradient(90deg,#9a9a9a 0 2px,transparent 2px 3px);background-position:0px 0"></div>
<div style="position:absolute;left:1222px;top:633px;width:334px;height:1px;background:repeating-linear-gradient(90deg,#9a9a9a 0 2px,transparent 2px 3px);background-position:1px 0"></div>
<div style="position:absolute;left:1222px;top:646px;width:334px;height:1px;background:repeating-linear-gradient(90deg,#9a9a9a 0 2px,transparent 2px 3px);background-position:0px 0"></div>
<div style="position:absolute;left:1222px;top:647px;width:334px;height:1px;background:repeating-linear-gradient(90deg,#9a9a9a 0 2px,transparent 2px 3px);background-position:1px 0"></div>
<div style="position:absolute;left:1222px;top:660px;width:334px;height:1px;background:repeating-linear-gradient(90deg,#9a9a9a 0 2px,transparent 2px 3px);background-position:0px 0"></div>
<div style="position:absolute;left:1222px;top:661px;width:334px;height:1px;background:repeating-linear-gradient(90deg,#9a9a9a 0 2px,transparent 2px 3px);background-position:1px 0"></div>
<div style="position:absolute;left:1222px;top:574px;width:334px;height:1px;background:repeating-linear-gradient(90deg,#9a9a9a 0 2px,transparent 2px 3px);background-position:0px 0"></div>
<div class="t e" style="left:1103.5px;top:518px;;">«Expr»</div>
<div class="t e" style="left:1103.5px;top:533px;;">«Expr»</div>
<div class="t e" style="left:1103.5px;top:546px;;">«Expr»</div>
<div class="t e" style="left:1103.5px;top:561px;;">«Expr»</div>
<div class="t e" style="left:1103.5px;top:578px;;">«Expr»</div>
<div class="t e" style="left:1103.5px;top:593px;;">«Expr»</div>
<div class="t e" style="left:1103.5px;top:606px;;">«Expr»</div>
<div class="t e" style="left:1103.5px;top:619px;;">«Expr»</div>
<div class="t e" style="left:1103.5px;top:633px;;">«Expr»</div>
<div class="t e" style="left:1103.5px;top:649px;;">«Expr»</div>
<div class="t e" style="left:1103.5px;top:662px;;">«Expr»</div>
<div class="t e" style="left:1224.5px;top:518px;;">«Expr»</div>
<div class="t e" style="left:1224.5px;top:533px;;">«Expr»</div>
<div class="t e" style="left:1224.5px;top:546px;;">«Expr»</div>
<div class="t e" style="left:1224.5px;top:560px;;">«Expr»</div>
<div class="t e" style="left:1224.5px;top:577px;;">«Expr»</div>
<div class="t e" style="left:1224.5px;top:592px;;">«Expr»</div>
<div class="t e" style="left:1224.5px;top:605px;;">«Expr»</div>
<div class="t e" style="left:1224.5px;top:618px;;">«Expr»</div>
<div class="t e" style="left:1224.5px;top:634px;;">«Expr»</div>
<div class="t e" style="left:1224.5px;top:648px;;">«Expr»</div>
<div class="t e" style="left:1224.5px;top:662px;;">«Expr»</div>
<div style="position:absolute;left:1576px;top:523px;width:93px;height:1px;background:repeating-linear-gradient(90deg,#9a9a9a 0 2px,transparent 2px 3px);background-position:0px 0"></div>
<div style="position:absolute;left:1669px;top:522px;width:119px;height:1px;background:repeating-linear-gradient(90deg,#9a9a9a 0 2px,transparent 2px 3px);background-position:0px 0"></div>
<div style="position:absolute;left:1576px;top:640px;width:212px;height:1px;background:repeating-linear-gradient(90deg,#9a9a9a 0 2px,transparent 2px 3px);background-position:0px 0"></div>
<div style="position:absolute;left:1576px;top:523px;width:1px;height:118px;background:repeating-linear-gradient(180deg,#9a9a9a 0 2px,transparent 2px 3px)"></div>
<div style="position:absolute;left:1669px;top:522px;width:1px;height:119px;background:#9a9a9a;"></div>
<div style="position:absolute;left:1576px;top:537px;width:212px;height:1px;background:repeating-linear-gradient(90deg,#9a9a9a 0 2px,transparent 2px 3px);background-position:0px 0"></div>
<div style="position:absolute;left:1576px;top:538px;width:212px;height:1px;background:repeating-linear-gradient(90deg,#9a9a9a 0 2px,transparent 2px 3px);background-position:1px 0"></div>
<div style="position:absolute;left:1576px;top:552px;width:212px;height:1px;background:repeating-linear-gradient(90deg,#9a9a9a 0 2px,transparent 2px 3px);background-position:0px 0"></div>
<div style="position:absolute;left:1576px;top:553px;width:212px;height:1px;background:repeating-linear-gradient(90deg,#9a9a9a 0 2px,transparent 2px 3px);background-position:1px 0"></div>
<div style="position:absolute;left:1576px;top:581px;width:212px;height:1px;background:repeating-linear-gradient(90deg,#9a9a9a 0 2px,transparent 2px 3px);background-position:0px 0"></div>
<div style="position:absolute;left:1576px;top:582px;width:212px;height:1px;background:repeating-linear-gradient(90deg,#9a9a9a 0 2px,transparent 2px 3px);background-position:1px 0"></div>
<div style="position:absolute;left:1576px;top:611px;width:212px;height:1px;background:repeating-linear-gradient(90deg,#9a9a9a 0 2px,transparent 2px 3px);background-position:0px 0"></div>
<div style="position:absolute;left:1576px;top:612px;width:212px;height:1px;background:repeating-linear-gradient(90deg,#9a9a9a 0 2px,transparent 2px 3px);background-position:1px 0"></div>
<div style="position:absolute;left:1576px;top:625px;width:212px;height:1px;background:repeating-linear-gradient(90deg,#9a9a9a 0 2px,transparent 2px 3px);background-position:0px 0"></div>
<div style="position:absolute;left:1576px;top:626px;width:212px;height:1px;background:repeating-linear-gradient(90deg,#9a9a9a 0 2px,transparent 2px 3px);background-position:1px 0"></div>
<div style="position:absolute;left:1576px;top:567px;width:212px;height:1px;background:repeating-linear-gradient(90deg,#9a9a9a 0 2px,transparent 2px 3px);background-position:0px 0"></div>
<div style="position:absolute;left:1576px;top:596px;width:212px;height:1px;background:repeating-linear-gradient(90deg,#9a9a9a 0 2px,transparent 2px 3px);background-position:0px 0"></div>
<div class="t e" style="left:1578px;top:525px;;">«Expr»</div>
<div class="t er" style="left:1726px;top:525px;;">«Expr»</div>
<div class="t e" style="left:1578px;top:539px;;">«Expr»</div>
<div class="t er" style="left:1726px;top:539px;;">«Expr»</div>
<div class="t e" style="left:1578px;top:555px;;">«Expr»</div>
<div class="t er" style="left:1726px;top:555px;;">«Expr»</div>
<div class="t e" style="left:1578px;top:569px;;">«Expr»</div>
<div class="t er" style="left:1726px;top:569px;;">«Expr»</div>
<div class="t e" style="left:1578px;top:584px;;">«Expr»</div>
<div class="t er" style="left:1726px;top:584px;;">«Expr»</div>
<div class="t e" style="left:1578px;top:599px;;">«Expr»</div>
<div class="t er" style="left:1726px;top:599px;;">«Expr»</div>
<div class="t e" style="left:1578px;top:614px;;">«Expr»</div>
<div class="t er" style="left:1726px;top:614px;;">«Expr»</div>
<div class="t e" style="left:1578px;top:627px;;">«Expr»</div>
<div class="t er" style="left:1726px;top:627px;;">«Expr»</div>
<div style="position:absolute;left:1101px;top:696px;width:687px;height:1px;background:repeating-linear-gradient(90deg,#9a9a9a 0 2px,transparent 2px 3px);background-position:0px 0"></div>
<div style="position:absolute;left:1101px;top:699px;width:687px;height:1px;background:repeating-linear-gradient(90deg,#9a9a9a 0 2px,transparent 2px 3px);background-position:0px 0"></div>
<div style="position:absolute;left:1122px;top:697px;width:1px;height:6px;background:repeating-linear-gradient(180deg,#9a9a9a 0 2px,transparent 2px 3px)"></div>
<div style="position:absolute;left:1167px;top:699px;width:1px;height:13px;background:repeating-linear-gradient(180deg,#9a9a9a 0 2px,transparent 2px 3px)"></div>
<div style="position:absolute;left:1318px;top:699px;width:1px;height:13px;background:repeating-linear-gradient(180deg,#9a9a9a 0 2px,transparent 2px 3px)"></div>
<div style="position:absolute;left:1387px;top:699px;width:1px;height:13px;background:repeating-linear-gradient(180deg,#9a9a9a 0 2px,transparent 2px 3px)"></div>
<div style="position:absolute;left:1453px;top:699px;width:1px;height:13px;background:repeating-linear-gradient(180deg,#9a9a9a 0 2px,transparent 2px 3px)"></div>
<div style="position:absolute;left:1509px;top:699px;width:1px;height:13px;background:repeating-linear-gradient(180deg,#9a9a9a 0 2px,transparent 2px 3px)"></div>
<div style="position:absolute;left:1583px;top:699px;width:1px;height:13px;background:repeating-linear-gradient(180deg,#9a9a9a 0 2px,transparent 2px 3px)"></div>
<div style="position:absolute;left:1653px;top:699px;width:1px;height:13px;background:repeating-linear-gradient(180deg,#9a9a9a 0 2px,transparent 2px 3px)"></div>
<div style="position:absolute;left:1716px;top:699px;width:1px;height:13px;background:repeating-linear-gradient(180deg,#9a9a9a 0 2px,transparent 2px 3px)"></div>
<div style="position:absolute;left:1787px;top:699px;width:1px;height:13px;background:repeating-linear-gradient(180deg,#9a9a9a 0 2px,transparent 2px 3px)"></div>
<div class="abs" style="left:1103px;top:700px;width:63px;height:12px;overflow:hidden"><div class="t h" style="left:0px;top:1px;letter-spacing:0.047px">[No_SalesIr</div></div>
<div class="abs" style="left:1174px;top:700px;width:143px;height:12px;overflow:hidden"><div class="t h" style="left:0px;top:1px;letter-spacing:0.003px">[Desc_SalesInvLineCaption</div></div>
<div class="abs" style="left:1325px;top:700px;width:56px;height:12px;overflow:hidden"><div class="t h" style="left:0px;top:1px;letter-spacing:0.118px">[First(Post</div></div>
<div class="abs" style="left:1392px;top:700px;width:60px;height:12px;overflow:hidden"><div class="t h" style="left:0px;top:1px;letter-spacing:0.231px">eCaption]</div></div>
<div class="abs" style="left:1461px;top:700px;width:46px;height:12px;overflow:hidden"><div class="t h" style="left:0px;top:1px;letter-spacing:0.076px">[UOM_S</div></div>
<div class="abs" style="left:1515px;top:700px;width:66px;height:12px;overflow:hidden"><div class="t h" style="left:-3px;top:1px;letter-spacing:0.323px">ceCaption)]</div></div>
<div class="abs" style="left:1589px;top:700px;width:62px;height:12px;overflow:hidden"><div class="t h" style="left:-3px;top:1px;letter-spacing:0.077px">scCaption)]</div></div>
<div class="abs" style="left:1661px;top:700px;width:52px;height:12px;overflow:hidden"><div class="t h" style="left:0px;top:1px;letter-spacing:0.421px">[VATIden</div></div>
<div class="abs" style="left:1722px;top:700px;width:66px;height:12px;overflow:hidden"><div class="t h" style="left:-4px;top:1px;letter-spacing:0.358px">untCaption)]</div></div>
<div style="position:absolute;left:1852px;top:270px;width:17px;height:441px;background:#f0f0f0;"></div>
<div style="position:absolute;left:1853px;top:287px;width:15px;height:138px;background:#c9c9c9;"></div>
<svg style="left:1856px;top:275px" width="9" height="6" viewBox="0 0 9 6"><path d="M0.8 5 L4.5 1.2 L8.2 5" stroke="#555" fill="none" stroke-width="1.6"/></svg>
<svg style="left:1856px;top:700px" width="9" height="6" viewBox="0 0 9 6"><path d="M0.8 1 L4.5 4.8 L8.2 1" stroke="#555" fill="none" stroke-width="1.6"/></svg>
</div></div>
<svg style="left:1058px;top:719px" width="16" height="13" viewBox="0 0 16 13"><rect width="16" height="13" fill="#808080"/><rect x="1" y="1" width="4" height="2" fill="#fff"/><rect x="6" y="1" width="4" height="2" fill="#fff"/><rect x="11" y="1" width="4" height="2" fill="#fff"/><rect x="1" y="4" width="4" height="2" fill="#c4dcf6"/><rect x="6" y="4" width="4" height="2" fill="#c4dcf6"/><rect x="11" y="4" width="4" height="2" fill="#c4dcf6"/><rect x="1" y="7" width="4" height="2" fill="#fff"/><rect x="6" y="7" width="4" height="2" fill="#fff"/><rect x="11" y="7" width="4" height="2" fill="#fff"/><rect x="1" y="10" width="4" height="2" fill="#c4dcf6"/><rect x="6" y="10" width="4" height="2" fill="#c4dcf6"/><rect x="11" y="10" width="4" height="2" fill="#c4dcf6"/></svg>
<svg style="left:1466px;top:719px" width="16" height="13" viewBox="0 0 16 13"><rect width="16" height="13" fill="#808080"/><rect x="1" y="1" width="4" height="2" fill="#c4dcf6"/><rect x="6" y="1" width="4" height="2" fill="#fff"/><rect x="11" y="1" width="4" height="2" fill="#c4dcf6"/><rect x="1" y="4" width="4" height="2" fill="#c4dcf6"/><rect x="6" y="4" width="4" height="2" fill="#fff"/><rect x="11" y="4" width="4" height="2" fill="#c4dcf6"/><rect x="1" y="7" width="4" height="2" fill="#c4dcf6"/><rect x="6" y="7" width="4" height="2" fill="#fff"/><rect x="11" y="7" width="4" height="2" fill="#c4dcf6"/><rect x="1" y="10" width="4" height="2" fill="#c4dcf6"/><rect x="6" y="10" width="4" height="2" fill="#fff"/><rect x="11" y="10" width="4" height="2" fill="#c4dcf6"/></svg>
<div class="t s" style="left:1083px;top:719px;line-height:17px;letter-spacing:-0.092px;">Row Groups</div>
<div class="t s" style="left:1491px;top:719px;line-height:17px;letter-spacing:0.012px;">Column Groups</div>
<svg style="left:1855px;top:726px" width="7" height="4" viewBox="0 0 7 4"><path d="M0 0 H7 L3.5 4 Z" fill="#aaa"/></svg>
<div style="position:absolute;left:1055px;top:737px;width:405px;height:122px;background:#fff;"></div>
<div style="position:absolute;left:1463px;top:737px;width:406px;height:122px;background:#fff;"></div>
<div class="abs" style="left:1057px;top:740px;width:402px;height:20px;border:1px solid #3c3c3c;border-radius:2px;background:#696969"></div>
<div style="position:absolute;left:1439px;top:741px;width:1px;height:18px;background:#3c3c3c;"></div>
<svg style="left:1445px;top:748px" width="7" height="4" viewBox="0 0 7 4"><path d="M0 0 H7 L3.5 4 Z" fill="#111"/></svg>
<div style="position:absolute;left:1062px;top:745px;width:1px;height:9px;background:#858585;"></div>
<div style="position:absolute;left:1062px;top:745px;width:4px;height:1px;background:#858585;"></div>
<div style="position:absolute;left:1062px;top:753px;width:4px;height:1px;background:#858585;"></div>
<div class="t s" style="left:1070px;top:741px;line-height:17px;color:#f0f0f0;letter-spacing:-0.036px;">(TotalsGroup)</div>
<div style="position:absolute;left:850px;top:863px;width:1021px;height:21px;background:#2d2d2d;"></div>
<svg style="left:858px;top:865px" width="16" height="17" viewBox="0 0 16 17"><rect x="0.5" y="0.5" width="8" height="15" fill="none" stroke="#d8d8d8"/><path d="M2 3.5h5M2 6.5h5" stroke="#d8d8d8"/><rect x="2" y="11" width="2" height="2" fill="#d8d8d8"/><circle cx="10.5" cy="12" r="4" fill="#2b2b2b" stroke="#d8d8d8"/></svg>
<div class="t s" style="left:874px;top:866.5px;font-size:12px;line-height:17px;color:#f4f4f4;letter-spacing:-0.059px;">No current report server.</div>
<div class="t s" style="left:1010px;top:866.5px;font-size:12px;line-height:17px;color:#f4f4f4;text-decoration:underline;letter-spacing:0.028px;">Connect</div>
<div style="position:absolute;left:1452px;top:865px;width:18px;height:16px;background:#fff;"></div>
<svg style="left:1455px;top:866px" width="12" height="13" viewBox="0 0 12 13"><rect x="1.5" y="0.5" width="9" height="11" fill="#f4f4f4" stroke="#b8b8b8"/><path d="M1 1 L7 7 H1 Z" fill="#3f74c4"/><path d="M2.5 3.5 L4.5 5.5 H2.5Z" fill="#f4f4f4"/><rect x="1" y="8.5" width="8" height="2.5" fill="#e89a3c"/><rect x="8.5" y="4" width="1.5" height="5" fill="#f0c080"/></svg>
<div class="abs" style="left:1472px;top:865px;width:18px;height:16px;border:1px solid #3a3a3a"></div>
<svg style="left:1475px;top:866px" width="12" height="13" viewBox="0 0 12 13"><rect x="1.5" y="0.5" width="8" height="10" fill="#d8d8d8" stroke="#9a9a9a"/><rect x="2.5" y="4" width="1.5" height="4" fill="#3f74c4"/><rect x="4.5" y="3" width="1.5" height="5" fill="#555"/><circle cx="8" cy="8" r="2.6" fill="#e8e8e8"/><path d="M7 6.2 L10 8 L7 9.8Z" fill="#4f9a74"/></svg>
<div class="t s" style="left:1499px;top:866.5px;font-size:12px;line-height:17px;color:#f4f4f4;letter-spacing:-0.776px;">100%</div>
<div style="position:absolute;left:1539px;top:871px;width:12px;height:4px;background:#fff;"></div>
<div style="position:absolute;left:1556px;top:871.5px;width:103px;height:2.5px;background:#fff;"></div>
<div style="position:absolute;left:1605.5px;top:869.5px;width:3px;height:8px;background:#fff;"></div>
<div style="position:absolute;left:1664px;top:871px;width:12px;height:4px;background:#fff;"></div>
<div style="position:absolute;left:1668px;top:867px;width:4px;height:12px;background:#fff;"></div>
</div></body></html>
